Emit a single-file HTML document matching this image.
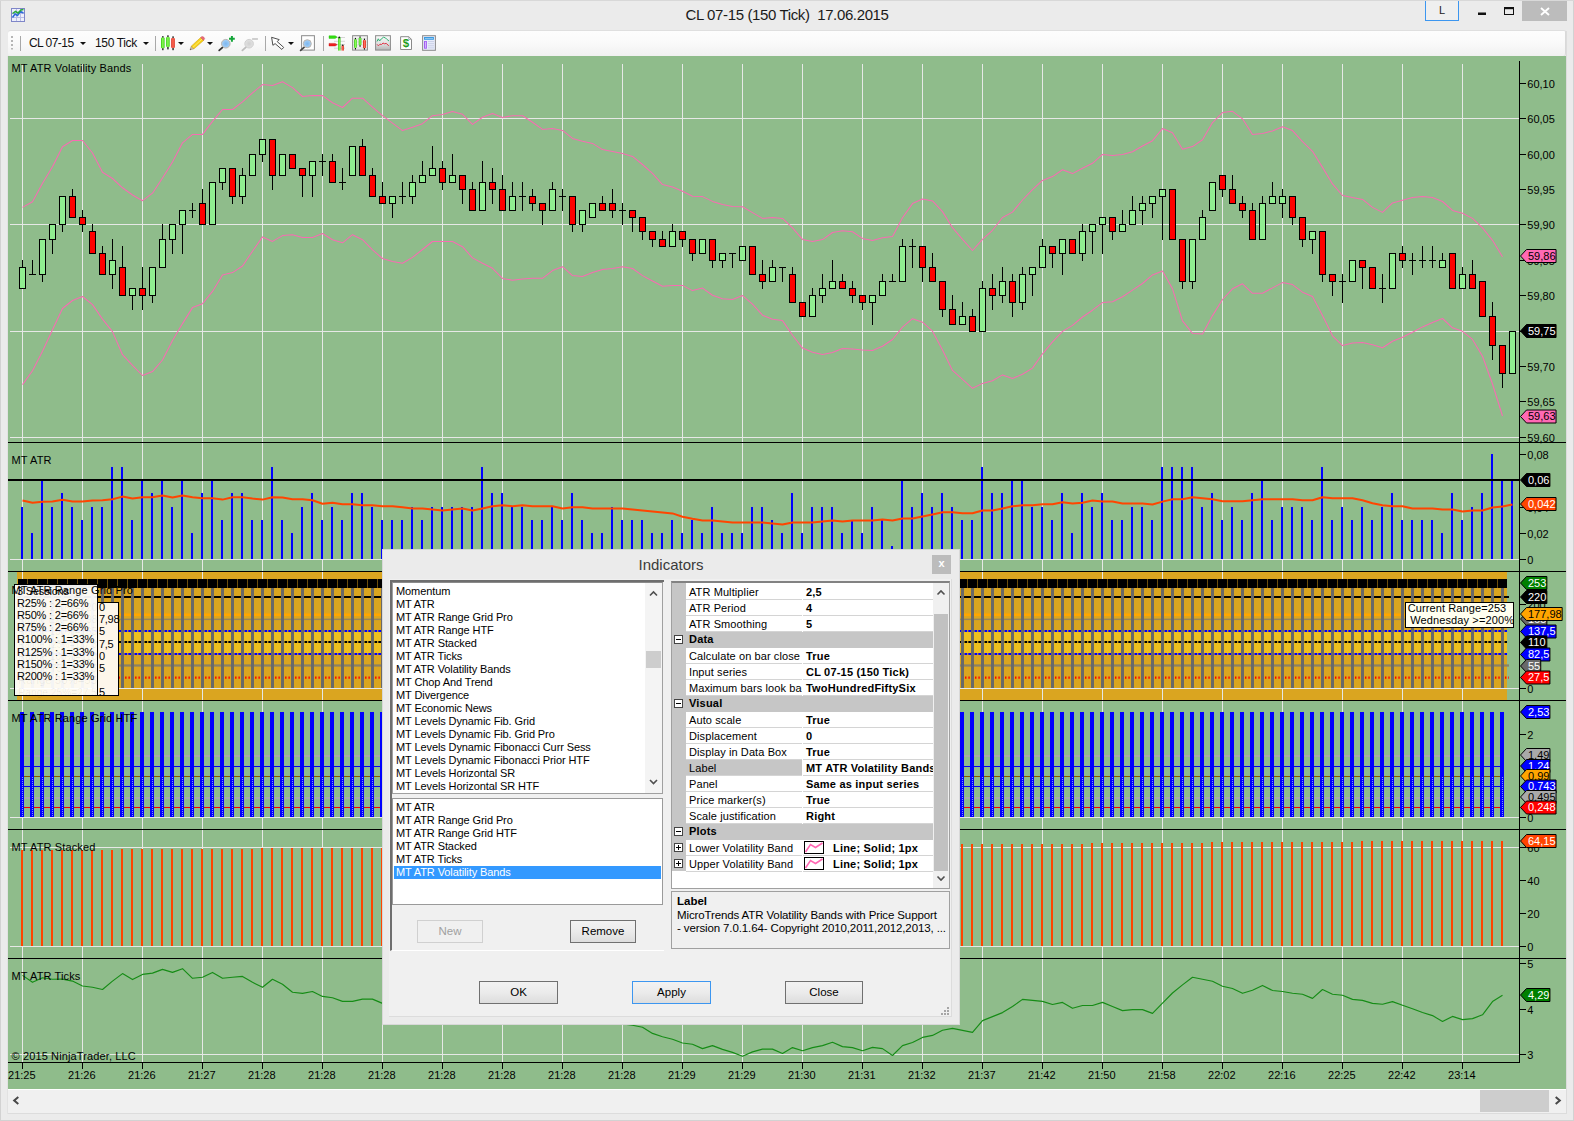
<!DOCTYPE html>
<html><head><meta charset="utf-8"><title>CL 07-15 (150 Tick) 17.06.2015</title>
<style>
html,body{margin:0;padding:0}
body{width:1574px;height:1121px;overflow:hidden;position:relative;background:#ebebeb;font-family:"Liberation Sans",Arial,sans-serif;font-size:11px;color:#000}
.abs{position:absolute}
#frameL{left:0;top:0;width:1px;height:1121px;background:#d2d2d2}
#frameT{left:0;top:0;width:1574px;height:1px;background:#d8d8d8}
#title{left:0;top:5px;width:1574px;text-align:center;font-size:15px;letter-spacing:-0.37px;color:#1a1a1a;white-space:pre;line-height:20px}
#btnL{left:1425px;top:0px;width:32px;height:19px;border:1px solid #3c96f0;background:#efefef;text-align:center;font-size:11px;line-height:18px;color:#222}
#btnX{left:1522px;top:1px;width:45px;height:20px;background:#bcbcbc}
#toolbar{left:8px;top:30px;width:1557px;height:25px;border-top:1px solid #dfdfdf;border-right:1px solid #d9d9d9;border-radius:3px 2px 3px 3px;background:linear-gradient(#fdfdfd,#fafafa 45%,#f1f1f1 100%)}
.tbt{position:absolute;top:5px;font-size:12px;line-height:14px;color:#111;white-space:pre;letter-spacing:-0.35px}
.sep{position:absolute;top:5px;width:1px;height:15px;background:#a8a8a8}
.dd{position:absolute;top:11px;width:0;height:0;border-left:3px solid transparent;border-right:3px solid transparent;border-top:3.5px solid #111}
#hscroll{left:8px;top:1089px;width:1558px;height:23px;background:#f0f0f0;border-top:1px solid #fff;border-bottom:1px solid #dcdcdc}
#thumb{left:1480px;top:1090px;width:69px;height:22px;background:#cdcdcd}
/* dialog */
#dlg{left:382px;top:549px;width:578px;height:476px;background:#ebebeb;box-shadow:inset 0 0 0 1px rgba(200,200,200,.55)}
#dlgc{left:7px;top:30px;width:562px;height:437px;background:#f0f0f0;border-right:1px solid #dcdcdc;border-bottom:1px solid #dcdcdc}
#dtitle{left:0px;top:6px;width:578px;text-align:center;font-size:15px;line-height:20px;color:#3a3a3a}
#dclose{left:550px;top:6px;width:19px;height:19px;background:#bcbcbc;color:#fff;text-align:center;font-size:11px;line-height:17px;font-weight:bold}
.lb{position:absolute;background:#fff;font-size:11px;line-height:13px;overflow:hidden}
.lb div{padding-left:3px;height:13px;letter-spacing:-0.1px;white-space:pre;position:relative;top:1px}
.btn{position:absolute;box-sizing:border-box;border:1px solid #707070;background:linear-gradient(#f2f2f2,#ebebeb 50%,#dddddd);text-align:center;font-size:11.5px;line-height:21px;height:23px;color:#000}
.pg{position:absolute;font-size:11px;line-height:17px;white-space:pre}
.row{position:absolute;left:0;width:261px;height:16px}
.row .n{position:absolute;left:14px;top:0;width:116px;height:15px;background:#fff;border-bottom:1px solid #d4d4d4;overflow:hidden;text-indent:3px;letter-spacing:0.1px}
.row .v{position:absolute;left:131px;top:0;width:130px;height:15px;background:#fff;border-bottom:1px solid #d4d4d4;font-weight:bold;overflow:hidden;text-indent:3px;letter-spacing:0.2px}
.cat{position:absolute;left:0;width:261px;height:16px;background:#c6c6c6;font-weight:bold;text-indent:17px;line-height:15px;letter-spacing:0.2px}
.pm{position:absolute;left:2px;top:3px;width:7px;height:7px;border:1px solid #444;background:#fff}
.pm:before{content:"";position:absolute;left:1px;top:3px;width:5px;height:1px;background:#000}
.pm.plus:after{content:"";position:absolute;left:3px;top:1px;width:1px;height:5px;background:#000}
</style></head><body>
<div class="abs" id="title">CL 07-15 (150 Tick)  17.06.2015</div>
<div class="abs" id="btnL">L</div>
<div class="abs" id="btnX"></div>
<div class="abs" id="toolbar">
 <div class="tbt" style="left:21px;letter-spacing:-0.55px">CL 07-15</div><div class="dd" style="left:72px"></div>
 <div class="tbt" style="left:87px">150 Tick</div><div class="dd" style="left:135px"></div>
 <div class="sep" style="left:12px"></div><div class="sep" style="left:147px"></div><div class="sep" style="left:257px"></div><div class="sep" style="left:315px"></div>
 <div class="dd" style="left:170px"></div><div class="dd" style="left:199px"></div><div class="dd" style="left:280px"></div>
</div>
<div class="abs" id="hscroll"></div><div class="abs" style="left:1566px;top:31px;width:1px;height:1083px;background:#dcdcdc"></div><div class="abs" style="left:7px;top:56px;width:1px;height:1058px;background:#e2e2e2"></div><div class="abs" style="left:0;top:0;width:1px;height:1121px;background:#d2d2d2"></div><div class="abs" style="left:1573px;top:0;width:1px;height:1121px;background:#d2d2d2"></div><div class="abs" style="left:0;top:1120px;width:1574px;height:1px;background:#d2d2d2"></div><div class="abs" style="left:0;top:0;width:1574px;height:1px;background:#d8d8d8"></div><div class="abs" id="thumb"></div>
<svg id="chart" width="1574" height="1121" viewBox="0 0 1574 1121" style="position:absolute;left:0;top:0" font-family="Liberation Sans, Arial, sans-serif" font-size="11">
<rect x="8" y="56" width="1558" height="1033" fill="#8fbc8b" />
<g shape-rendering="crispEdges">
<rect x="17" y="572" width="1490" height="128" fill="#daa520" />
<rect x="17" y="632" width="1490" height="21" fill="#eebf1f" />
<rect x="22" y="64" width="1" height="998" fill="#e6e8e6" />
<rect x="82" y="64" width="1" height="998" fill="#e6e8e6" />
<rect x="142" y="64" width="1" height="998" fill="#e6e8e6" />
<rect x="202" y="64" width="1" height="998" fill="#e6e8e6" />
<rect x="262" y="64" width="1" height="998" fill="#e6e8e6" />
<rect x="322" y="64" width="1" height="998" fill="#e6e8e6" />
<rect x="382" y="64" width="1" height="998" fill="#e6e8e6" />
<rect x="442" y="64" width="1" height="998" fill="#e6e8e6" />
<rect x="502" y="64" width="1" height="998" fill="#e6e8e6" />
<rect x="562" y="64" width="1" height="998" fill="#e6e8e6" />
<rect x="622" y="64" width="1" height="998" fill="#e6e8e6" />
<rect x="682" y="64" width="1" height="998" fill="#e6e8e6" />
<rect x="742" y="64" width="1" height="998" fill="#e6e8e6" />
<rect x="802" y="64" width="1" height="998" fill="#e6e8e6" />
<rect x="862" y="64" width="1" height="998" fill="#e6e8e6" />
<rect x="922" y="64" width="1" height="998" fill="#e6e8e6" />
<rect x="982" y="64" width="1" height="998" fill="#e6e8e6" />
<rect x="1042" y="64" width="1" height="998" fill="#e6e8e6" />
<rect x="1102" y="64" width="1" height="998" fill="#e6e8e6" />
<rect x="1162" y="64" width="1" height="998" fill="#e6e8e6" />
<rect x="1222" y="64" width="1" height="998" fill="#e6e8e6" />
<rect x="1282" y="64" width="1" height="998" fill="#e6e8e6" />
<rect x="1342" y="64" width="1" height="998" fill="#e6e8e6" />
<rect x="1402" y="64" width="1" height="998" fill="#e6e8e6" />
<rect x="1462" y="64" width="1" height="998" fill="#e6e8e6" />
<rect x="10" y="118" width="1510" height="1" fill="#e6e8e6" />
<rect x="10" y="224" width="1510" height="1" fill="#e6e8e6" />
<rect x="10" y="331" width="1510" height="1" fill="#e6e8e6" />
<rect x="10" y="437" width="1510" height="1" fill="#e6e8e6" />
<rect x="10" y="559" width="1510" height="1" fill="#e6e8e6" />
<rect x="10" y="688" width="1510" height="1" fill="#e6e8e6" />
<rect x="10" y="817" width="1510" height="1" fill="#e6e8e6" />
<rect x="10" y="847" width="1510" height="1" fill="#e6e8e6" />
<rect x="10" y="946" width="1510" height="1" fill="#e6e8e6" />
<rect x="10" y="1054" width="1510" height="1" fill="#e6e8e6" />
</g>
<polyline fill="none" stroke="#f86cb2" stroke-width="1.05" stroke-linejoin="round"  points="22.5,207.4 32.5,201.7 42.5,183.3 52.5,166.8 62.5,146.8 72.5,140.5 82.5,140.5 92.5,153 102.5,172.3 112.5,178.5 122.5,187.8 132.5,195 142.5,200.7 152.5,193.2 162.5,178 172.5,162 182.5,142.8 192.5,134.4 202.5,134.4 212.5,121.4 222.5,109.5 232.5,109.5 242.5,101.8 252.5,92.9 262.5,84.6 272.5,85.4 282.5,81.7 292.5,87.6 302.5,96.5 312.5,95.6 322.5,95.6 332.5,102.7 342.5,107.5 352.5,98.2 362.5,98.2 372.5,107.1 382.5,115.7 392.5,123.2 402.5,130.6 412.5,127.2 422.5,123.7 432.5,115.7 442.5,114.6 452.5,111.6 462.5,114.3 472.5,124.4 482.5,117.3 492.5,113.4 502.5,117.5 512.5,115.7 522.5,115.7 532.5,122.3 542.5,129.4 552.5,128.6 562.5,130.4 572.5,138.4 582.5,141.2 592.5,143.4 602.5,149.6 612.5,151.4 622.5,153.5 632.5,156.4 642.5,164.5 652.5,173.4 662.5,184.6 672.5,187.1 682.5,191.2 692.5,196.2 702.5,196.6 712.5,201.4 722.5,204.6 732.5,206.4 742.5,206.8 752.5,212.6 762.5,218.4 772.5,217.5 782.5,218.4 792.5,227.8 802.5,239.4 812.5,241.4 822.5,239.6 832.5,232.5 842.5,230.7 852.5,231.8 862.5,238.4 872.5,240.5 882.5,237.8 892.5,236.6 902.5,217.8 912.5,203.6 922.5,199.1 932.5,200.9 942.5,211.6 952.5,227.7 962.5,239.3 972.5,250.5 982.5,239.3 992.5,230.3 1002.5,217.5 1012.5,212.1 1022.5,200 1032.5,189.6 1042.5,180.4 1052.5,176.6 1062.5,169.7 1072.5,173.6 1082.5,168.3 1092.5,163.3 1102.5,154.4 1112.5,155.5 1122.5,154.4 1132.5,151.7 1142.5,146 1152.5,140.7 1162.5,128.6 1172.5,132.7 1182.5,149.2 1192.5,146.6 1202.5,139.8 1212.5,122.6 1222.5,112.6 1232.5,111.3 1242.5,118.8 1252.5,134.5 1262.5,133.6 1272.5,130.9 1282.5,126.8 1292.5,130.6 1302.5,141.6 1312.5,151.3 1322.5,167.4 1332.5,183.9 1342.5,195.5 1352.5,197.6 1362.5,199.4 1372.5,207.4 1382.5,212.4 1392.5,202.9 1402.5,200.3 1412.5,197.6 1422.5,196.4 1432.5,197.6 1442.5,201.5 1452.5,210.4 1462.5,213.3 1472.5,218.4 1482.5,227.8 1492.5,240.3 1502.5,256.8"/>
<polyline fill="none" stroke="#f86cb2" stroke-width="1.05" stroke-linejoin="round"  points="22.5,384.6 32.5,370.7 42.5,351.2 52.5,329.8 62.5,308.5 72.5,300.5 82.5,296.5 92.5,304.6 102.5,319.1 112.5,331.6 122.5,354.7 132.5,365.4 142.5,375.5 152.5,371.6 162.5,360 172.5,340.5 182.5,323.6 192.5,307.6 202.5,303.7 212.5,291.4 222.5,274.9 232.5,272.6 242.5,266 252.5,251.2 262.5,236.9 272.5,241.4 282.5,235.6 292.5,234.7 302.5,237.4 312.5,237.4 322.5,233.5 332.5,239.7 342.5,242.8 352.5,234.7 362.5,239.7 372.5,249.9 382.5,258.5 392.5,261.5 402.5,263.3 412.5,257.4 422.5,249.5 432.5,241.5 442.5,241.5 452.5,241.5 462.5,246.7 472.5,257.9 482.5,263.3 492.5,268.3 502.5,278.4 512.5,280.2 522.5,279 532.5,278.3 542.5,278.3 552.5,270.6 562.5,266.7 572.5,275.6 582.5,276.5 592.5,272.4 602.5,269.4 612.5,268.5 622.5,266.7 632.5,268.5 642.5,275.6 652.5,281 662.5,286.3 672.5,285.4 682.5,285.4 692.5,290.6 702.5,288.1 712.5,295.3 722.5,298.7 732.5,299.5 742.5,295.6 752.5,304.2 762.5,315.2 772.5,319.3 782.5,320.6 792.5,335.2 802.5,348.1 812.5,352.2 822.5,354.4 832.5,352.6 842.5,348.5 852.5,349 862.5,349.9 872.5,350.4 882.5,346.3 892.5,339.5 902.5,327.1 912.5,318.7 922.5,322.2 932.5,331.2 942.5,349.9 952.5,370.4 962.5,379.3 972.5,388.3 982.5,383.4 992.5,380.8 1002.5,374.9 1012.5,378.4 1022.5,374.3 1032.5,368.1 1042.5,353.8 1052.5,341.9 1062.5,331.4 1072.5,325.4 1082.5,317 1092.5,310.2 1102.5,302.6 1112.5,301.7 1122.5,296.8 1132.5,290.1 1142.5,283.5 1152.5,274.9 1162.5,271 1172.5,288.8 1182.5,320.9 1192.5,333.4 1202.5,334 1212.5,315.6 1222.5,299.5 1232.5,288.8 1242.5,283.8 1252.5,293.3 1262.5,293.3 1272.5,287.9 1282.5,282.6 1292.5,284.6 1302.5,292.2 1312.5,296.5 1322.5,315.5 1332.5,335.8 1342.5,345.6 1352.5,342.9 1362.5,342.6 1372.5,344.7 1382.5,347.8 1392.5,341.2 1402.5,337.2 1412.5,332.2 1422.5,326.9 1432.5,322.4 1442.5,318.5 1452.5,327.8 1462.5,331.3 1472.5,339.4 1482.5,356.3 1492.5,384 1502.5,416"/>
<g shape-rendering="crispEdges">
<rect x="22" y="260" width="1" height="29" fill="#000" />
<rect x="19" y="267" width="7" height="22" fill="#000" />
<rect x="20" y="268" width="5" height="20" fill="#90ee90" />
<rect x="32" y="260" width="1" height="15" fill="#000" />
<rect x="29" y="274" width="7" height="1" fill="#000" />
<rect x="42" y="239" width="1" height="43" fill="#000" />
<rect x="39" y="239" width="7" height="36" fill="#000" />
<rect x="40" y="240" width="5" height="34" fill="#90ee90" />
<rect x="52" y="224" width="1" height="30" fill="#000" />
<rect x="49" y="224" width="7" height="16" fill="#000" />
<rect x="50" y="225" width="5" height="14" fill="#90ee90" />
<rect x="62" y="196" width="1" height="36" fill="#000" />
<rect x="59" y="196" width="7" height="29" fill="#000" />
<rect x="60" y="197" width="5" height="27" fill="#90ee90" />
<rect x="72" y="189" width="1" height="29" fill="#000" />
<rect x="69" y="196" width="7" height="22" fill="#000" />
<rect x="70" y="197" width="5" height="20" fill="#ff0000" />
<rect x="82" y="210" width="1" height="22" fill="#000" />
<rect x="79" y="217" width="7" height="8" fill="#000" />
<rect x="80" y="218" width="5" height="6" fill="#ff0000" />
<rect x="92" y="224" width="1" height="30" fill="#000" />
<rect x="89" y="231" width="7" height="23" fill="#000" />
<rect x="90" y="232" width="5" height="21" fill="#ff0000" />
<rect x="102" y="246" width="1" height="29" fill="#000" />
<rect x="99" y="253" width="7" height="22" fill="#000" />
<rect x="100" y="254" width="5" height="20" fill="#ff0000" />
<rect x="112" y="239" width="1" height="50" fill="#000" />
<rect x="109" y="260" width="7" height="15" fill="#000" />
<rect x="110" y="261" width="5" height="13" fill="#90ee90" />
<rect x="122" y="246" width="1" height="50" fill="#000" />
<rect x="119" y="267" width="7" height="29" fill="#000" />
<rect x="120" y="268" width="5" height="27" fill="#ff0000" />
<rect x="132" y="288" width="1" height="22" fill="#000" />
<rect x="129" y="288" width="7" height="8" fill="#000" />
<rect x="130" y="289" width="5" height="6" fill="#90ee90" />
<rect x="142" y="267" width="1" height="43" fill="#000" />
<rect x="139" y="288" width="7" height="8" fill="#000" />
<rect x="140" y="289" width="5" height="6" fill="#ff0000" />
<rect x="152" y="267" width="1" height="36" fill="#000" />
<rect x="149" y="267" width="7" height="29" fill="#000" />
<rect x="150" y="268" width="5" height="27" fill="#90ee90" />
<rect x="162" y="224" width="1" height="44" fill="#000" />
<rect x="159" y="239" width="7" height="29" fill="#000" />
<rect x="160" y="240" width="5" height="27" fill="#90ee90" />
<rect x="172" y="224" width="1" height="30" fill="#000" />
<rect x="169" y="224" width="7" height="16" fill="#000" />
<rect x="170" y="225" width="5" height="14" fill="#90ee90" />
<rect x="182" y="210" width="1" height="44" fill="#000" />
<rect x="179" y="210" width="7" height="15" fill="#000" />
<rect x="180" y="211" width="5" height="13" fill="#90ee90" />
<rect x="192" y="203" width="1" height="15" fill="#000" />
<rect x="189" y="210" width="7" height="1" fill="#000" />
<rect x="202" y="189" width="1" height="36" fill="#000" />
<rect x="199" y="203" width="7" height="22" fill="#000" />
<rect x="200" y="204" width="5" height="20" fill="#ff0000" />
<rect x="212" y="182" width="1" height="43" fill="#000" />
<rect x="209" y="182" width="7" height="43" fill="#000" />
<rect x="210" y="183" width="5" height="41" fill="#90ee90" />
<rect x="222" y="168" width="1" height="22" fill="#000" />
<rect x="219" y="168" width="7" height="15" fill="#000" />
<rect x="220" y="169" width="5" height="13" fill="#90ee90" />
<rect x="232" y="168" width="1" height="36" fill="#000" />
<rect x="229" y="168" width="7" height="29" fill="#000" />
<rect x="230" y="169" width="5" height="27" fill="#ff0000" />
<rect x="242" y="168" width="1" height="36" fill="#000" />
<rect x="239" y="175" width="7" height="22" fill="#000" />
<rect x="240" y="176" width="5" height="20" fill="#90ee90" />
<rect x="252" y="154" width="1" height="22" fill="#000" />
<rect x="249" y="154" width="7" height="22" fill="#000" />
<rect x="250" y="155" width="5" height="20" fill="#90ee90" />
<rect x="262" y="139" width="1" height="23" fill="#000" />
<rect x="259" y="139" width="7" height="16" fill="#000" />
<rect x="260" y="140" width="5" height="14" fill="#90ee90" />
<rect x="272" y="139" width="1" height="51" fill="#000" />
<rect x="269" y="139" width="7" height="37" fill="#000" />
<rect x="270" y="140" width="5" height="35" fill="#ff0000" />
<rect x="282" y="154" width="1" height="22" fill="#000" />
<rect x="279" y="154" width="7" height="22" fill="#000" />
<rect x="280" y="155" width="5" height="20" fill="#90ee90" />
<rect x="292" y="154" width="1" height="15" fill="#000" />
<rect x="289" y="154" width="7" height="15" fill="#000" />
<rect x="290" y="155" width="5" height="13" fill="#ff0000" />
<rect x="302" y="168" width="1" height="29" fill="#000" />
<rect x="299" y="168" width="7" height="8" fill="#000" />
<rect x="300" y="169" width="5" height="6" fill="#ff0000" />
<rect x="312" y="161" width="1" height="36" fill="#000" />
<rect x="309" y="161" width="7" height="15" fill="#000" />
<rect x="310" y="162" width="5" height="13" fill="#90ee90" />
<rect x="322" y="154" width="1" height="22" fill="#000" />
<rect x="319" y="161" width="7" height="1" fill="#000" />
<rect x="332" y="154" width="1" height="29" fill="#000" />
<rect x="329" y="161" width="7" height="22" fill="#000" />
<rect x="330" y="162" width="5" height="20" fill="#ff0000" />
<rect x="342" y="168" width="1" height="22" fill="#000" />
<rect x="339" y="182" width="7" height="1" fill="#000" />
<rect x="352" y="146" width="1" height="30" fill="#000" />
<rect x="349" y="146" width="7" height="30" fill="#000" />
<rect x="350" y="147" width="5" height="28" fill="#90ee90" />
<rect x="362" y="139" width="1" height="37" fill="#000" />
<rect x="359" y="146" width="7" height="30" fill="#000" />
<rect x="360" y="147" width="5" height="28" fill="#ff0000" />
<rect x="372" y="168" width="1" height="29" fill="#000" />
<rect x="369" y="175" width="7" height="22" fill="#000" />
<rect x="370" y="176" width="5" height="20" fill="#ff0000" />
<rect x="382" y="182" width="1" height="22" fill="#000" />
<rect x="379" y="196" width="7" height="8" fill="#000" />
<rect x="380" y="197" width="5" height="6" fill="#ff0000" />
<rect x="392" y="196" width="1" height="22" fill="#000" />
<rect x="389" y="196" width="7" height="8" fill="#000" />
<rect x="390" y="197" width="5" height="6" fill="#90ee90" />
<rect x="402" y="182" width="1" height="22" fill="#000" />
<rect x="399" y="196" width="7" height="1" fill="#000" />
<rect x="412" y="175" width="1" height="29" fill="#000" />
<rect x="409" y="182" width="7" height="15" fill="#000" />
<rect x="410" y="183" width="5" height="13" fill="#90ee90" />
<rect x="422" y="161" width="1" height="22" fill="#000" />
<rect x="419" y="175" width="7" height="8" fill="#000" />
<rect x="420" y="176" width="5" height="6" fill="#90ee90" />
<rect x="432" y="146" width="1" height="30" fill="#000" />
<rect x="429" y="168" width="7" height="8" fill="#000" />
<rect x="430" y="169" width="5" height="6" fill="#90ee90" />
<rect x="442" y="161" width="1" height="29" fill="#000" />
<rect x="439" y="168" width="7" height="15" fill="#000" />
<rect x="440" y="169" width="5" height="13" fill="#ff0000" />
<rect x="452" y="154" width="1" height="29" fill="#000" />
<rect x="449" y="175" width="7" height="8" fill="#000" />
<rect x="450" y="176" width="5" height="6" fill="#90ee90" />
<rect x="462" y="175" width="1" height="29" fill="#000" />
<rect x="459" y="175" width="7" height="15" fill="#000" />
<rect x="460" y="176" width="5" height="13" fill="#ff0000" />
<rect x="472" y="182" width="1" height="29" fill="#000" />
<rect x="469" y="189" width="7" height="22" fill="#000" />
<rect x="470" y="190" width="5" height="20" fill="#ff0000" />
<rect x="482" y="161" width="1" height="50" fill="#000" />
<rect x="479" y="182" width="7" height="29" fill="#000" />
<rect x="480" y="183" width="5" height="27" fill="#90ee90" />
<rect x="492" y="168" width="1" height="36" fill="#000" />
<rect x="489" y="182" width="7" height="8" fill="#000" />
<rect x="490" y="183" width="5" height="6" fill="#ff0000" />
<rect x="502" y="175" width="1" height="36" fill="#000" />
<rect x="499" y="189" width="7" height="22" fill="#000" />
<rect x="500" y="190" width="5" height="20" fill="#ff0000" />
<rect x="512" y="182" width="1" height="29" fill="#000" />
<rect x="509" y="196" width="7" height="15" fill="#000" />
<rect x="510" y="197" width="5" height="13" fill="#90ee90" />
<rect x="522" y="182" width="1" height="29" fill="#000" />
<rect x="519" y="196" width="7" height="1" fill="#000" />
<rect x="532" y="189" width="1" height="22" fill="#000" />
<rect x="529" y="196" width="7" height="8" fill="#000" />
<rect x="530" y="197" width="5" height="6" fill="#ff0000" />
<rect x="542" y="203" width="1" height="22" fill="#000" />
<rect x="539" y="203" width="7" height="8" fill="#000" />
<rect x="540" y="204" width="5" height="6" fill="#ff0000" />
<rect x="552" y="182" width="1" height="29" fill="#000" />
<rect x="549" y="189" width="7" height="22" fill="#000" />
<rect x="550" y="190" width="5" height="20" fill="#90ee90" />
<rect x="562" y="189" width="1" height="22" fill="#000" />
<rect x="559" y="196" width="7" height="1" fill="#000" />
<rect x="572" y="196" width="1" height="36" fill="#000" />
<rect x="569" y="196" width="7" height="29" fill="#000" />
<rect x="570" y="197" width="5" height="27" fill="#ff0000" />
<rect x="582" y="210" width="1" height="22" fill="#000" />
<rect x="579" y="210" width="7" height="15" fill="#000" />
<rect x="580" y="211" width="5" height="13" fill="#90ee90" />
<rect x="592" y="203" width="1" height="15" fill="#000" />
<rect x="589" y="203" width="7" height="15" fill="#000" />
<rect x="590" y="204" width="5" height="13" fill="#90ee90" />
<rect x="602" y="196" width="1" height="15" fill="#000" />
<rect x="599" y="203" width="7" height="8" fill="#000" />
<rect x="600" y="204" width="5" height="6" fill="#ff0000" />
<rect x="612" y="189" width="1" height="29" fill="#000" />
<rect x="609" y="203" width="7" height="8" fill="#000" />
<rect x="610" y="204" width="5" height="6" fill="#ff0000" />
<rect x="622" y="203" width="1" height="22" fill="#000" />
<rect x="619" y="210" width="7" height="1" fill="#000" />
<rect x="632" y="210" width="1" height="22" fill="#000" />
<rect x="629" y="210" width="7" height="8" fill="#000" />
<rect x="630" y="211" width="5" height="6" fill="#ff0000" />
<rect x="642" y="217" width="1" height="23" fill="#000" />
<rect x="639" y="217" width="7" height="15" fill="#000" />
<rect x="640" y="218" width="5" height="13" fill="#ff0000" />
<rect x="652" y="231" width="1" height="16" fill="#000" />
<rect x="649" y="231" width="7" height="9" fill="#000" />
<rect x="650" y="232" width="5" height="7" fill="#ff0000" />
<rect x="662" y="231" width="1" height="16" fill="#000" />
<rect x="659" y="239" width="7" height="8" fill="#000" />
<rect x="660" y="240" width="5" height="6" fill="#ff0000" />
<rect x="672" y="224" width="1" height="23" fill="#000" />
<rect x="669" y="231" width="7" height="16" fill="#000" />
<rect x="670" y="232" width="5" height="14" fill="#90ee90" />
<rect x="682" y="231" width="1" height="16" fill="#000" />
<rect x="679" y="231" width="7" height="9" fill="#000" />
<rect x="680" y="232" width="5" height="7" fill="#ff0000" />
<rect x="692" y="239" width="1" height="22" fill="#000" />
<rect x="689" y="239" width="7" height="15" fill="#000" />
<rect x="690" y="240" width="5" height="13" fill="#ff0000" />
<rect x="702" y="239" width="1" height="15" fill="#000" />
<rect x="699" y="239" width="7" height="15" fill="#000" />
<rect x="700" y="240" width="5" height="13" fill="#90ee90" />
<rect x="712" y="239" width="1" height="29" fill="#000" />
<rect x="709" y="239" width="7" height="22" fill="#000" />
<rect x="710" y="240" width="5" height="20" fill="#ff0000" />
<rect x="722" y="253" width="1" height="15" fill="#000" />
<rect x="719" y="253" width="7" height="8" fill="#000" />
<rect x="720" y="254" width="5" height="6" fill="#90ee90" />
<rect x="732" y="253" width="1" height="15" fill="#000" />
<rect x="729" y="253" width="7" height="1" fill="#000" />
<rect x="742" y="246" width="1" height="15" fill="#000" />
<rect x="739" y="246" width="7" height="15" fill="#000" />
<rect x="740" y="247" width="5" height="13" fill="#90ee90" />
<rect x="752" y="246" width="1" height="29" fill="#000" />
<rect x="749" y="246" width="7" height="29" fill="#000" />
<rect x="750" y="247" width="5" height="27" fill="#ff0000" />
<rect x="762" y="260" width="1" height="29" fill="#000" />
<rect x="759" y="274" width="7" height="8" fill="#000" />
<rect x="760" y="275" width="5" height="6" fill="#ff0000" />
<rect x="772" y="260" width="1" height="22" fill="#000" />
<rect x="769" y="267" width="7" height="15" fill="#000" />
<rect x="770" y="268" width="5" height="13" fill="#90ee90" />
<rect x="782" y="267" width="1" height="15" fill="#000" />
<rect x="779" y="267" width="7" height="1" fill="#000" />
<rect x="792" y="267" width="1" height="36" fill="#000" />
<rect x="789" y="274" width="7" height="29" fill="#000" />
<rect x="790" y="275" width="5" height="27" fill="#ff0000" />
<rect x="802" y="302" width="1" height="15" fill="#000" />
<rect x="799" y="302" width="7" height="15" fill="#000" />
<rect x="800" y="303" width="5" height="13" fill="#ff0000" />
<rect x="812" y="288" width="1" height="29" fill="#000" />
<rect x="809" y="295" width="7" height="22" fill="#000" />
<rect x="810" y="296" width="5" height="20" fill="#90ee90" />
<rect x="822" y="274" width="1" height="29" fill="#000" />
<rect x="819" y="288" width="7" height="8" fill="#000" />
<rect x="820" y="289" width="5" height="6" fill="#90ee90" />
<rect x="832" y="260" width="1" height="29" fill="#000" />
<rect x="829" y="281" width="7" height="8" fill="#000" />
<rect x="830" y="282" width="5" height="6" fill="#90ee90" />
<rect x="842" y="274" width="1" height="15" fill="#000" />
<rect x="839" y="281" width="7" height="8" fill="#000" />
<rect x="840" y="282" width="5" height="6" fill="#ff0000" />
<rect x="852" y="281" width="1" height="22" fill="#000" />
<rect x="849" y="288" width="7" height="8" fill="#000" />
<rect x="850" y="289" width="5" height="6" fill="#ff0000" />
<rect x="862" y="295" width="1" height="15" fill="#000" />
<rect x="859" y="295" width="7" height="8" fill="#000" />
<rect x="860" y="296" width="5" height="6" fill="#ff0000" />
<rect x="872" y="295" width="1" height="30" fill="#000" />
<rect x="869" y="295" width="7" height="8" fill="#000" />
<rect x="870" y="296" width="5" height="6" fill="#90ee90" />
<rect x="882" y="274" width="1" height="22" fill="#000" />
<rect x="879" y="281" width="7" height="15" fill="#000" />
<rect x="880" y="282" width="5" height="13" fill="#90ee90" />
<rect x="892" y="274" width="1" height="8" fill="#000" />
<rect x="889" y="281" width="7" height="1" fill="#000" />
<rect x="902" y="239" width="1" height="43" fill="#000" />
<rect x="899" y="246" width="7" height="36" fill="#000" />
<rect x="900" y="247" width="5" height="34" fill="#90ee90" />
<rect x="912" y="239" width="1" height="29" fill="#000" />
<rect x="909" y="246" width="7" height="1" fill="#000" />
<rect x="922" y="246" width="1" height="36" fill="#000" />
<rect x="919" y="246" width="7" height="22" fill="#000" />
<rect x="920" y="247" width="5" height="20" fill="#ff0000" />
<rect x="932" y="253" width="1" height="29" fill="#000" />
<rect x="929" y="267" width="7" height="15" fill="#000" />
<rect x="930" y="268" width="5" height="13" fill="#ff0000" />
<rect x="942" y="281" width="1" height="36" fill="#000" />
<rect x="939" y="281" width="7" height="29" fill="#000" />
<rect x="940" y="282" width="5" height="27" fill="#ff0000" />
<rect x="952" y="295" width="1" height="30" fill="#000" />
<rect x="949" y="309" width="7" height="16" fill="#000" />
<rect x="950" y="310" width="5" height="14" fill="#ff0000" />
<rect x="962" y="302" width="1" height="23" fill="#000" />
<rect x="959" y="316" width="7" height="9" fill="#000" />
<rect x="960" y="317" width="5" height="7" fill="#90ee90" />
<rect x="972" y="309" width="1" height="23" fill="#000" />
<rect x="969" y="316" width="7" height="16" fill="#000" />
<rect x="970" y="317" width="5" height="14" fill="#ff0000" />
<rect x="982" y="281" width="1" height="51" fill="#000" />
<rect x="979" y="288" width="7" height="44" fill="#000" />
<rect x="980" y="289" width="5" height="42" fill="#90ee90" />
<rect x="992" y="274" width="1" height="36" fill="#000" />
<rect x="989" y="288" width="7" height="8" fill="#000" />
<rect x="990" y="289" width="5" height="6" fill="#ff0000" />
<rect x="1002" y="267" width="1" height="36" fill="#000" />
<rect x="999" y="281" width="7" height="15" fill="#000" />
<rect x="1000" y="282" width="5" height="13" fill="#90ee90" />
<rect x="1012" y="274" width="1" height="43" fill="#000" />
<rect x="1009" y="281" width="7" height="22" fill="#000" />
<rect x="1010" y="282" width="5" height="20" fill="#ff0000" />
<rect x="1022" y="267" width="1" height="43" fill="#000" />
<rect x="1019" y="274" width="7" height="29" fill="#000" />
<rect x="1020" y="275" width="5" height="27" fill="#90ee90" />
<rect x="1032" y="267" width="1" height="29" fill="#000" />
<rect x="1029" y="267" width="7" height="8" fill="#000" />
<rect x="1030" y="268" width="5" height="6" fill="#90ee90" />
<rect x="1042" y="239" width="1" height="29" fill="#000" />
<rect x="1039" y="246" width="7" height="22" fill="#000" />
<rect x="1040" y="247" width="5" height="20" fill="#90ee90" />
<rect x="1052" y="246" width="1" height="22" fill="#000" />
<rect x="1049" y="246" width="7" height="8" fill="#000" />
<rect x="1050" y="247" width="5" height="6" fill="#ff0000" />
<rect x="1062" y="239" width="1" height="36" fill="#000" />
<rect x="1059" y="239" width="7" height="15" fill="#000" />
<rect x="1060" y="240" width="5" height="13" fill="#90ee90" />
<rect x="1072" y="239" width="1" height="15" fill="#000" />
<rect x="1069" y="239" width="7" height="15" fill="#000" />
<rect x="1070" y="240" width="5" height="13" fill="#ff0000" />
<rect x="1082" y="224" width="1" height="37" fill="#000" />
<rect x="1079" y="231" width="7" height="23" fill="#000" />
<rect x="1080" y="232" width="5" height="21" fill="#90ee90" />
<rect x="1092" y="224" width="1" height="30" fill="#000" />
<rect x="1089" y="224" width="7" height="8" fill="#000" />
<rect x="1090" y="225" width="5" height="6" fill="#90ee90" />
<rect x="1102" y="217" width="1" height="37" fill="#000" />
<rect x="1099" y="217" width="7" height="8" fill="#000" />
<rect x="1100" y="218" width="5" height="6" fill="#90ee90" />
<rect x="1112" y="217" width="1" height="23" fill="#000" />
<rect x="1109" y="217" width="7" height="15" fill="#000" />
<rect x="1110" y="218" width="5" height="13" fill="#ff0000" />
<rect x="1122" y="210" width="1" height="22" fill="#000" />
<rect x="1119" y="224" width="7" height="8" fill="#000" />
<rect x="1120" y="225" width="5" height="6" fill="#90ee90" />
<rect x="1132" y="196" width="1" height="29" fill="#000" />
<rect x="1129" y="210" width="7" height="15" fill="#000" />
<rect x="1130" y="211" width="5" height="13" fill="#90ee90" />
<rect x="1142" y="196" width="1" height="29" fill="#000" />
<rect x="1139" y="203" width="7" height="8" fill="#000" />
<rect x="1140" y="204" width="5" height="6" fill="#90ee90" />
<rect x="1152" y="196" width="1" height="22" fill="#000" />
<rect x="1149" y="196" width="7" height="8" fill="#000" />
<rect x="1150" y="197" width="5" height="6" fill="#90ee90" />
<rect x="1162" y="189" width="1" height="51" fill="#000" />
<rect x="1159" y="189" width="7" height="8" fill="#000" />
<rect x="1160" y="190" width="5" height="6" fill="#90ee90" />
<rect x="1172" y="189" width="1" height="51" fill="#000" />
<rect x="1169" y="189" width="7" height="51" fill="#000" />
<rect x="1170" y="190" width="5" height="49" fill="#ff0000" />
<rect x="1182" y="239" width="1" height="50" fill="#000" />
<rect x="1179" y="239" width="7" height="43" fill="#000" />
<rect x="1180" y="240" width="5" height="41" fill="#ff0000" />
<rect x="1192" y="239" width="1" height="50" fill="#000" />
<rect x="1189" y="239" width="7" height="43" fill="#000" />
<rect x="1190" y="240" width="5" height="41" fill="#90ee90" />
<rect x="1202" y="210" width="1" height="30" fill="#000" />
<rect x="1199" y="217" width="7" height="23" fill="#000" />
<rect x="1200" y="218" width="5" height="21" fill="#90ee90" />
<rect x="1212" y="182" width="1" height="29" fill="#000" />
<rect x="1209" y="182" width="7" height="29" fill="#000" />
<rect x="1210" y="183" width="5" height="27" fill="#90ee90" />
<rect x="1222" y="175" width="1" height="22" fill="#000" />
<rect x="1219" y="175" width="7" height="15" fill="#000" />
<rect x="1220" y="176" width="5" height="13" fill="#ff0000" />
<rect x="1232" y="175" width="1" height="29" fill="#000" />
<rect x="1229" y="189" width="7" height="15" fill="#000" />
<rect x="1230" y="190" width="5" height="13" fill="#ff0000" />
<rect x="1242" y="196" width="1" height="22" fill="#000" />
<rect x="1239" y="203" width="7" height="8" fill="#000" />
<rect x="1240" y="204" width="5" height="6" fill="#ff0000" />
<rect x="1252" y="203" width="1" height="37" fill="#000" />
<rect x="1249" y="210" width="7" height="30" fill="#000" />
<rect x="1250" y="211" width="5" height="28" fill="#ff0000" />
<rect x="1262" y="196" width="1" height="44" fill="#000" />
<rect x="1259" y="203" width="7" height="37" fill="#000" />
<rect x="1260" y="204" width="5" height="35" fill="#90ee90" />
<rect x="1272" y="182" width="1" height="22" fill="#000" />
<rect x="1269" y="196" width="7" height="8" fill="#000" />
<rect x="1270" y="197" width="5" height="6" fill="#90ee90" />
<rect x="1282" y="189" width="1" height="29" fill="#000" />
<rect x="1279" y="196" width="7" height="8" fill="#000" />
<rect x="1280" y="197" width="5" height="6" fill="#90ee90" />
<rect x="1292" y="196" width="1" height="29" fill="#000" />
<rect x="1289" y="196" width="7" height="22" fill="#000" />
<rect x="1290" y="197" width="5" height="20" fill="#ff0000" />
<rect x="1302" y="217" width="1" height="30" fill="#000" />
<rect x="1299" y="217" width="7" height="23" fill="#000" />
<rect x="1300" y="218" width="5" height="21" fill="#ff0000" />
<rect x="1312" y="231" width="1" height="23" fill="#000" />
<rect x="1309" y="231" width="7" height="9" fill="#000" />
<rect x="1310" y="232" width="5" height="7" fill="#90ee90" />
<rect x="1322" y="231" width="1" height="51" fill="#000" />
<rect x="1319" y="231" width="7" height="44" fill="#000" />
<rect x="1320" y="232" width="5" height="42" fill="#ff0000" />
<rect x="1332" y="274" width="1" height="22" fill="#000" />
<rect x="1329" y="274" width="7" height="8" fill="#000" />
<rect x="1330" y="275" width="5" height="6" fill="#ff0000" />
<rect x="1342" y="274" width="1" height="29" fill="#000" />
<rect x="1339" y="281" width="7" height="1" fill="#000" />
<rect x="1352" y="260" width="1" height="22" fill="#000" />
<rect x="1349" y="260" width="7" height="22" fill="#000" />
<rect x="1350" y="261" width="5" height="20" fill="#90ee90" />
<rect x="1362" y="260" width="1" height="29" fill="#000" />
<rect x="1359" y="260" width="7" height="8" fill="#000" />
<rect x="1360" y="261" width="5" height="6" fill="#ff0000" />
<rect x="1372" y="267" width="1" height="22" fill="#000" />
<rect x="1369" y="267" width="7" height="22" fill="#000" />
<rect x="1370" y="268" width="5" height="20" fill="#ff0000" />
<rect x="1382" y="274" width="1" height="29" fill="#000" />
<rect x="1379" y="288" width="7" height="1" fill="#000" />
<rect x="1392" y="253" width="1" height="36" fill="#000" />
<rect x="1389" y="253" width="7" height="36" fill="#000" />
<rect x="1390" y="254" width="5" height="34" fill="#90ee90" />
<rect x="1402" y="246" width="1" height="22" fill="#000" />
<rect x="1399" y="253" width="7" height="8" fill="#000" />
<rect x="1400" y="254" width="5" height="6" fill="#ff0000" />
<rect x="1412" y="253" width="1" height="22" fill="#000" />
<rect x="1409" y="260" width="7" height="1" fill="#000" />
<rect x="1422" y="246" width="1" height="22" fill="#000" />
<rect x="1419" y="260" width="7" height="1" fill="#000" />
<rect x="1432" y="246" width="1" height="22" fill="#000" />
<rect x="1429" y="260" width="7" height="1" fill="#000" />
<rect x="1442" y="253" width="1" height="15" fill="#000" />
<rect x="1439" y="260" width="7" height="8" fill="#000" />
<rect x="1440" y="261" width="5" height="6" fill="#90ee90" />
<rect x="1452" y="253" width="1" height="36" fill="#000" />
<rect x="1449" y="253" width="7" height="36" fill="#000" />
<rect x="1450" y="254" width="5" height="34" fill="#ff0000" />
<rect x="1462" y="267" width="1" height="22" fill="#000" />
<rect x="1459" y="274" width="7" height="15" fill="#000" />
<rect x="1460" y="275" width="5" height="13" fill="#90ee90" />
<rect x="1472" y="260" width="1" height="29" fill="#000" />
<rect x="1469" y="274" width="7" height="15" fill="#000" />
<rect x="1470" y="275" width="5" height="13" fill="#ff0000" />
<rect x="1482" y="281" width="1" height="36" fill="#000" />
<rect x="1479" y="281" width="7" height="36" fill="#000" />
<rect x="1480" y="282" width="5" height="34" fill="#ff0000" />
<rect x="1492" y="302" width="1" height="58" fill="#000" />
<rect x="1489" y="316" width="7" height="30" fill="#000" />
<rect x="1490" y="317" width="5" height="28" fill="#ff0000" />
<rect x="1502" y="345" width="1" height="43" fill="#000" />
<rect x="1499" y="345" width="7" height="29" fill="#000" />
<rect x="1500" y="346" width="5" height="27" fill="#ff0000" />
<rect x="1512" y="331" width="1" height="43" fill="#000" />
<rect x="1509" y="331" width="7" height="43" fill="#000" />
<rect x="1510" y="332" width="5" height="41" fill="#90ee90" />
</g>
<g shape-rendering="crispEdges">
<rect x="21" y="507" width="2" height="52" fill="#0000ff" />
<rect x="31" y="533" width="2" height="26" fill="#0000ff" />
<rect x="41" y="480" width="2" height="79" fill="#0000ff" />
<rect x="51" y="507" width="2" height="52" fill="#0000ff" />
<rect x="61" y="493" width="2" height="66" fill="#0000ff" />
<rect x="71" y="507" width="2" height="52" fill="#0000ff" />
<rect x="81" y="520" width="2" height="39" fill="#0000ff" />
<rect x="91" y="507" width="2" height="52" fill="#0000ff" />
<rect x="101" y="507" width="2" height="52" fill="#0000ff" />
<rect x="111" y="467" width="2" height="92" fill="#0000ff" />
<rect x="121" y="467" width="2" height="92" fill="#0000ff" />
<rect x="131" y="520" width="2" height="39" fill="#0000ff" />
<rect x="141" y="480" width="2" height="79" fill="#0000ff" />
<rect x="151" y="493" width="2" height="66" fill="#0000ff" />
<rect x="161" y="480" width="2" height="79" fill="#0000ff" />
<rect x="171" y="507" width="2" height="52" fill="#0000ff" />
<rect x="181" y="480" width="2" height="79" fill="#0000ff" />
<rect x="191" y="533" width="2" height="26" fill="#0000ff" />
<rect x="201" y="493" width="2" height="66" fill="#0000ff" />
<rect x="211" y="480" width="2" height="79" fill="#0000ff" />
<rect x="221" y="520" width="2" height="39" fill="#0000ff" />
<rect x="231" y="493" width="2" height="66" fill="#0000ff" />
<rect x="241" y="493" width="2" height="66" fill="#0000ff" />
<rect x="251" y="520" width="2" height="39" fill="#0000ff" />
<rect x="261" y="520" width="2" height="39" fill="#0000ff" />
<rect x="271" y="467" width="2" height="92" fill="#0000ff" />
<rect x="281" y="520" width="2" height="39" fill="#0000ff" />
<rect x="291" y="533" width="2" height="26" fill="#0000ff" />
<rect x="301" y="507" width="2" height="52" fill="#0000ff" />
<rect x="311" y="493" width="2" height="66" fill="#0000ff" />
<rect x="321" y="520" width="2" height="39" fill="#0000ff" />
<rect x="331" y="507" width="2" height="52" fill="#0000ff" />
<rect x="341" y="520" width="2" height="39" fill="#0000ff" />
<rect x="351" y="493" width="2" height="66" fill="#0000ff" />
<rect x="361" y="493" width="2" height="66" fill="#0000ff" />
<rect x="371" y="507" width="2" height="52" fill="#0000ff" />
<rect x="381" y="520" width="2" height="39" fill="#0000ff" />
<rect x="391" y="520" width="2" height="39" fill="#0000ff" />
<rect x="401" y="520" width="2" height="39" fill="#0000ff" />
<rect x="411" y="507" width="2" height="52" fill="#0000ff" />
<rect x="421" y="520" width="2" height="39" fill="#0000ff" />
<rect x="431" y="507" width="2" height="52" fill="#0000ff" />
<rect x="441" y="507" width="2" height="52" fill="#0000ff" />
<rect x="451" y="507" width="2" height="52" fill="#0000ff" />
<rect x="461" y="507" width="2" height="52" fill="#0000ff" />
<rect x="471" y="507" width="2" height="52" fill="#0000ff" />
<rect x="481" y="467" width="2" height="92" fill="#0000ff" />
<rect x="491" y="493" width="2" height="66" fill="#0000ff" />
<rect x="501" y="493" width="2" height="66" fill="#0000ff" />
<rect x="511" y="507" width="2" height="52" fill="#0000ff" />
<rect x="521" y="507" width="2" height="52" fill="#0000ff" />
<rect x="531" y="520" width="2" height="39" fill="#0000ff" />
<rect x="541" y="520" width="2" height="39" fill="#0000ff" />
<rect x="551" y="507" width="2" height="52" fill="#0000ff" />
<rect x="561" y="520" width="2" height="39" fill="#0000ff" />
<rect x="571" y="493" width="2" height="66" fill="#0000ff" />
<rect x="581" y="520" width="2" height="39" fill="#0000ff" />
<rect x="591" y="533" width="2" height="26" fill="#0000ff" />
<rect x="601" y="533" width="2" height="26" fill="#0000ff" />
<rect x="611" y="507" width="2" height="52" fill="#0000ff" />
<rect x="621" y="520" width="2" height="39" fill="#0000ff" />
<rect x="631" y="520" width="2" height="39" fill="#0000ff" />
<rect x="641" y="520" width="2" height="39" fill="#0000ff" />
<rect x="651" y="533" width="2" height="26" fill="#0000ff" />
<rect x="661" y="533" width="2" height="26" fill="#0000ff" />
<rect x="671" y="520" width="2" height="39" fill="#0000ff" />
<rect x="681" y="533" width="2" height="26" fill="#0000ff" />
<rect x="691" y="520" width="2" height="39" fill="#0000ff" />
<rect x="701" y="533" width="2" height="26" fill="#0000ff" />
<rect x="711" y="507" width="2" height="52" fill="#0000ff" />
<rect x="721" y="533" width="2" height="26" fill="#0000ff" />
<rect x="731" y="533" width="2" height="26" fill="#0000ff" />
<rect x="741" y="533" width="2" height="26" fill="#0000ff" />
<rect x="751" y="507" width="2" height="52" fill="#0000ff" />
<rect x="761" y="507" width="2" height="52" fill="#0000ff" />
<rect x="771" y="520" width="2" height="39" fill="#0000ff" />
<rect x="781" y="533" width="2" height="26" fill="#0000ff" />
<rect x="791" y="493" width="2" height="66" fill="#0000ff" />
<rect x="801" y="533" width="2" height="26" fill="#0000ff" />
<rect x="811" y="507" width="2" height="52" fill="#0000ff" />
<rect x="821" y="507" width="2" height="52" fill="#0000ff" />
<rect x="831" y="507" width="2" height="52" fill="#0000ff" />
<rect x="841" y="533" width="2" height="26" fill="#0000ff" />
<rect x="851" y="520" width="2" height="39" fill="#0000ff" />
<rect x="861" y="533" width="2" height="26" fill="#0000ff" />
<rect x="871" y="507" width="2" height="52" fill="#0000ff" />
<rect x="881" y="520" width="2" height="39" fill="#0000ff" />
<rect x="891" y="546" width="2" height="13" fill="#0000ff" />
<rect x="901" y="480" width="2" height="79" fill="#0000ff" />
<rect x="911" y="507" width="2" height="52" fill="#0000ff" />
<rect x="921" y="493" width="2" height="66" fill="#0000ff" />
<rect x="931" y="507" width="2" height="52" fill="#0000ff" />
<rect x="941" y="493" width="2" height="66" fill="#0000ff" />
<rect x="951" y="507" width="2" height="52" fill="#0000ff" />
<rect x="961" y="520" width="2" height="39" fill="#0000ff" />
<rect x="971" y="520" width="2" height="39" fill="#0000ff" />
<rect x="981" y="467" width="2" height="92" fill="#0000ff" />
<rect x="991" y="493" width="2" height="66" fill="#0000ff" />
<rect x="1001" y="493" width="2" height="66" fill="#0000ff" />
<rect x="1011" y="480" width="2" height="79" fill="#0000ff" />
<rect x="1021" y="480" width="2" height="79" fill="#0000ff" />
<rect x="1031" y="507" width="2" height="52" fill="#0000ff" />
<rect x="1041" y="507" width="2" height="52" fill="#0000ff" />
<rect x="1051" y="520" width="2" height="39" fill="#0000ff" />
<rect x="1061" y="493" width="2" height="66" fill="#0000ff" />
<rect x="1071" y="533" width="2" height="26" fill="#0000ff" />
<rect x="1081" y="493" width="2" height="66" fill="#0000ff" />
<rect x="1091" y="507" width="2" height="52" fill="#0000ff" />
<rect x="1101" y="493" width="2" height="66" fill="#0000ff" />
<rect x="1111" y="520" width="2" height="39" fill="#0000ff" />
<rect x="1121" y="520" width="2" height="39" fill="#0000ff" />
<rect x="1131" y="507" width="2" height="52" fill="#0000ff" />
<rect x="1141" y="507" width="2" height="52" fill="#0000ff" />
<rect x="1151" y="520" width="2" height="39" fill="#0000ff" />
<rect x="1161" y="467" width="2" height="92" fill="#0000ff" />
<rect x="1171" y="467" width="2" height="92" fill="#0000ff" />
<rect x="1181" y="467" width="2" height="92" fill="#0000ff" />
<rect x="1191" y="467" width="2" height="92" fill="#0000ff" />
<rect x="1201" y="507" width="2" height="52" fill="#0000ff" />
<rect x="1211" y="493" width="2" height="66" fill="#0000ff" />
<rect x="1221" y="520" width="2" height="39" fill="#0000ff" />
<rect x="1231" y="507" width="2" height="52" fill="#0000ff" />
<rect x="1241" y="520" width="2" height="39" fill="#0000ff" />
<rect x="1251" y="493" width="2" height="66" fill="#0000ff" />
<rect x="1261" y="480" width="2" height="79" fill="#0000ff" />
<rect x="1271" y="520" width="2" height="39" fill="#0000ff" />
<rect x="1281" y="507" width="2" height="52" fill="#0000ff" />
<rect x="1291" y="507" width="2" height="52" fill="#0000ff" />
<rect x="1301" y="507" width="2" height="52" fill="#0000ff" />
<rect x="1311" y="520" width="2" height="39" fill="#0000ff" />
<rect x="1321" y="467" width="2" height="92" fill="#0000ff" />
<rect x="1331" y="520" width="2" height="39" fill="#0000ff" />
<rect x="1341" y="507" width="2" height="52" fill="#0000ff" />
<rect x="1351" y="520" width="2" height="39" fill="#0000ff" />
<rect x="1361" y="507" width="2" height="52" fill="#0000ff" />
<rect x="1371" y="520" width="2" height="39" fill="#0000ff" />
<rect x="1381" y="507" width="2" height="52" fill="#0000ff" />
<rect x="1391" y="493" width="2" height="66" fill="#0000ff" />
<rect x="1401" y="520" width="2" height="39" fill="#0000ff" />
<rect x="1411" y="520" width="2" height="39" fill="#0000ff" />
<rect x="1421" y="520" width="2" height="39" fill="#0000ff" />
<rect x="1431" y="520" width="2" height="39" fill="#0000ff" />
<rect x="1441" y="533" width="2" height="26" fill="#0000ff" />
<rect x="1451" y="493" width="2" height="66" fill="#0000ff" />
<rect x="1461" y="520" width="2" height="39" fill="#0000ff" />
<rect x="1471" y="507" width="2" height="52" fill="#0000ff" />
<rect x="1481" y="493" width="2" height="66" fill="#0000ff" />
<rect x="1491" y="454" width="2" height="105" fill="#0000ff" />
<rect x="1501" y="480" width="2" height="79" fill="#0000ff" />
<rect x="1511" y="480" width="2" height="79" fill="#0000ff" />
<rect x="8" y="479" width="1512" height="2" fill="#000" />
</g>
<polyline fill="none" stroke="#ff4500" stroke-width="2" stroke-linejoin="round"  points="22.5,500.6 32.5,502.8 42.5,501.8 52.5,501.6 62.5,499.8 72.5,501.6 82.5,501.6 92.5,500.6 102.5,500.3 112.5,499.3 122.5,496.6 132.5,498.6 142.5,497.3 152.5,497.3 162.5,495.6 172.5,497.6 182.5,495.6 192.5,497.3 202.5,498.3 212.5,498.3 222.5,499.6 232.5,497.3 242.5,497.3 252.5,498.6 262.5,499.6 272.5,497.3 282.5,497.6 292.5,499.3 302.5,499.3 312.5,500.3 322.5,503.8 332.5,502.8 342.5,504.3 352.5,504.3 362.5,505.3 372.5,505.3 382.5,506.3 392.5,506.3 402.5,507.3 412.5,508.5 422.5,508.5 432.5,509.5 442.5,510.5 452.5,509.5 462.5,508.5 472.5,510.5 482.5,508.5 492.5,506.3 502.5,505.3 512.5,506.3 522.5,505.3 532.5,506.3 542.5,506.3 552.5,506.3 562.5,508.5 572.5,507.3 582.5,507.3 592.5,508.5 602.5,508.5 612.5,508.5 622.5,508.5 632.5,509.5 642.5,510.5 652.5,511.5 662.5,512.5 672.5,513.4 682.5,516.7 692.5,518.7 702.5,520.4 712.5,520.4 722.5,521.4 732.5,522.4 742.5,522.4 752.5,522.4 762.5,522.4 772.5,523.6 782.5,524.6 792.5,522.6 802.5,522.6 812.5,522.6 822.5,521.6 832.5,520.4 842.5,521.4 852.5,520.4 862.5,520.4 872.5,520.4 882.5,519.4 892.5,520.4 902.5,518.4 912.5,518.4 922.5,516.4 932.5,514.4 942.5,512.2 952.5,512.2 962.5,513.2 972.5,513.2 982.5,510.5 992.5,510.5 1002.5,508.5 1012.5,506.3 1022.5,505.3 1032.5,505.3 1042.5,504.3 1052.5,504.3 1062.5,502.3 1072.5,503.5 1082.5,502.8 1092.5,500.6 1102.5,501.6 1112.5,501.6 1122.5,503.5 1132.5,503.5 1142.5,503.5 1152.5,504.5 1162.5,501.6 1172.5,499.3 1182.5,499.3 1192.5,497.3 1202.5,498.3 1212.5,499.3 1222.5,501.3 1232.5,501.3 1242.5,501.3 1252.5,500.3 1262.5,499.3 1272.5,499.3 1282.5,499.3 1292.5,499.3 1302.5,500.3 1312.5,500.3 1322.5,497.3 1332.5,498.3 1342.5,498.3 1352.5,498.3 1362.5,500.3 1372.5,503.3 1382.5,505.3 1392.5,506.3 1402.5,506.3 1412.5,508.5 1422.5,508.5 1432.5,508.5 1442.5,509.5 1452.5,509.5 1462.5,511.5 1472.5,510.5 1482.5,510.5 1492.5,507.5 1502.5,506.5 1512.5,504.5"/>
<g shape-rendering="crispEdges">
<rect x="17" y="596" width="1492" height="2" fill="#000" />
</g>
<rect x="17" y="613.4" width="1490" height="2.6" fill="#ffa500"/>
<rect x="17" y="618.6" width="1490" height="1.5" fill="#94855c"/>
<rect x="17" y="664.4" width="1492" height="2.2" fill="#8a8068"/>
<line x1="24" x2="1507" y1="631" y2="631" stroke="#0000ff" stroke-width="2.2" stroke-dasharray="2.7 1.1 2.7 3.5" stroke-dashoffset="-0.5"/>
<line x1="24" x2="1507" y1="642" y2="642" stroke="#000" stroke-width="2" stroke-dasharray="2.7 1.1 2.7 3.5" stroke-dashoffset="-0.5"/>
<line x1="24" x2="1507" y1="654" y2="654" stroke="#0000ff" stroke-width="2.2" stroke-dasharray="2.7 1.1 2.7 3.5" stroke-dashoffset="-0.5"/>
<line x1="21.8" x2="1509" y1="677.7" y2="677.7" stroke="#ff0000" stroke-width="2.2" stroke-dasharray="1.4 1.933"/>
<g shape-rendering="crispEdges">
<rect x="21" y="588" width="3" height="100" fill="#696969" />
<rect x="31" y="588" width="3" height="100" fill="#696969" />
<rect x="41" y="588" width="3" height="100" fill="#696969" />
<rect x="51" y="588" width="3" height="100" fill="#696969" />
<rect x="61" y="588" width="3" height="100" fill="#696969" />
<rect x="71" y="588" width="3" height="100" fill="#696969" />
<rect x="81" y="588" width="3" height="100" fill="#696969" />
<rect x="91" y="588" width="3" height="100" fill="#696969" />
<rect x="101" y="588" width="3" height="100" fill="#696969" />
<rect x="111" y="588" width="3" height="100" fill="#696969" />
<rect x="121" y="588" width="3" height="100" fill="#696969" />
<rect x="131" y="588" width="3" height="100" fill="#696969" />
<rect x="141" y="588" width="3" height="100" fill="#696969" />
<rect x="151" y="588" width="3" height="100" fill="#696969" />
<rect x="161" y="588" width="3" height="100" fill="#696969" />
<rect x="171" y="588" width="3" height="100" fill="#696969" />
<rect x="181" y="588" width="3" height="100" fill="#696969" />
<rect x="191" y="588" width="3" height="100" fill="#696969" />
<rect x="201" y="588" width="3" height="100" fill="#696969" />
<rect x="211" y="588" width="3" height="100" fill="#696969" />
<rect x="221" y="588" width="3" height="100" fill="#696969" />
<rect x="231" y="588" width="3" height="100" fill="#696969" />
<rect x="241" y="588" width="3" height="100" fill="#696969" />
<rect x="251" y="588" width="3" height="100" fill="#696969" />
<rect x="261" y="588" width="3" height="100" fill="#696969" />
<rect x="271" y="588" width="3" height="100" fill="#696969" />
<rect x="281" y="588" width="3" height="100" fill="#696969" />
<rect x="291" y="588" width="3" height="100" fill="#696969" />
<rect x="301" y="588" width="3" height="100" fill="#696969" />
<rect x="311" y="588" width="3" height="100" fill="#696969" />
<rect x="321" y="588" width="3" height="100" fill="#696969" />
<rect x="331" y="588" width="3" height="100" fill="#696969" />
<rect x="341" y="588" width="3" height="100" fill="#696969" />
<rect x="351" y="588" width="3" height="100" fill="#696969" />
<rect x="361" y="588" width="3" height="100" fill="#696969" />
<rect x="371" y="588" width="3" height="100" fill="#696969" />
<rect x="381" y="588" width="3" height="100" fill="#696969" />
<rect x="391" y="588" width="3" height="100" fill="#696969" />
<rect x="401" y="588" width="3" height="100" fill="#696969" />
<rect x="411" y="588" width="3" height="100" fill="#696969" />
<rect x="421" y="588" width="3" height="100" fill="#696969" />
<rect x="431" y="588" width="3" height="100" fill="#696969" />
<rect x="441" y="588" width="3" height="100" fill="#696969" />
<rect x="451" y="588" width="3" height="100" fill="#696969" />
<rect x="461" y="588" width="3" height="100" fill="#696969" />
<rect x="471" y="588" width="3" height="100" fill="#696969" />
<rect x="481" y="588" width="3" height="100" fill="#696969" />
<rect x="491" y="588" width="3" height="100" fill="#696969" />
<rect x="501" y="588" width="3" height="100" fill="#696969" />
<rect x="511" y="588" width="3" height="100" fill="#696969" />
<rect x="521" y="588" width="3" height="100" fill="#696969" />
<rect x="531" y="588" width="3" height="100" fill="#696969" />
<rect x="541" y="588" width="3" height="100" fill="#696969" />
<rect x="551" y="588" width="3" height="100" fill="#696969" />
<rect x="561" y="588" width="3" height="100" fill="#696969" />
<rect x="571" y="588" width="3" height="100" fill="#696969" />
<rect x="581" y="588" width="3" height="100" fill="#696969" />
<rect x="591" y="588" width="3" height="100" fill="#696969" />
<rect x="601" y="588" width="3" height="100" fill="#696969" />
<rect x="611" y="588" width="3" height="100" fill="#696969" />
<rect x="621" y="588" width="3" height="100" fill="#696969" />
<rect x="631" y="588" width="3" height="100" fill="#696969" />
<rect x="641" y="588" width="3" height="100" fill="#696969" />
<rect x="651" y="588" width="3" height="100" fill="#696969" />
<rect x="661" y="588" width="3" height="100" fill="#696969" />
<rect x="671" y="588" width="3" height="100" fill="#696969" />
<rect x="681" y="588" width="3" height="100" fill="#696969" />
<rect x="691" y="588" width="3" height="100" fill="#696969" />
<rect x="701" y="588" width="3" height="100" fill="#696969" />
<rect x="711" y="588" width="3" height="100" fill="#696969" />
<rect x="721" y="588" width="3" height="100" fill="#696969" />
<rect x="731" y="588" width="3" height="100" fill="#696969" />
<rect x="741" y="588" width="3" height="100" fill="#696969" />
<rect x="751" y="588" width="3" height="100" fill="#696969" />
<rect x="761" y="588" width="3" height="100" fill="#696969" />
<rect x="771" y="588" width="3" height="100" fill="#696969" />
<rect x="781" y="588" width="3" height="100" fill="#696969" />
<rect x="791" y="588" width="3" height="100" fill="#696969" />
<rect x="801" y="588" width="3" height="100" fill="#696969" />
<rect x="811" y="588" width="3" height="100" fill="#696969" />
<rect x="821" y="588" width="3" height="100" fill="#696969" />
<rect x="831" y="588" width="3" height="100" fill="#696969" />
<rect x="841" y="588" width="3" height="100" fill="#696969" />
<rect x="851" y="588" width="3" height="100" fill="#696969" />
<rect x="861" y="588" width="3" height="100" fill="#696969" />
<rect x="871" y="588" width="3" height="100" fill="#696969" />
<rect x="881" y="588" width="3" height="100" fill="#696969" />
<rect x="891" y="588" width="3" height="100" fill="#696969" />
<rect x="901" y="588" width="3" height="100" fill="#696969" />
<rect x="911" y="588" width="3" height="100" fill="#696969" />
<rect x="921" y="588" width="3" height="100" fill="#696969" />
<rect x="931" y="588" width="3" height="100" fill="#696969" />
<rect x="941" y="588" width="3" height="100" fill="#696969" />
<rect x="951" y="588" width="3" height="100" fill="#696969" />
<rect x="961" y="588" width="3" height="100" fill="#696969" />
<rect x="971" y="588" width="3" height="100" fill="#696969" />
<rect x="981" y="588" width="3" height="100" fill="#696969" />
<rect x="991" y="588" width="3" height="100" fill="#696969" />
<rect x="1001" y="588" width="3" height="100" fill="#696969" />
<rect x="1011" y="588" width="3" height="100" fill="#696969" />
<rect x="1021" y="588" width="3" height="100" fill="#696969" />
<rect x="1031" y="588" width="3" height="100" fill="#696969" />
<rect x="1041" y="588" width="3" height="100" fill="#696969" />
<rect x="1051" y="588" width="3" height="100" fill="#696969" />
<rect x="1061" y="588" width="3" height="100" fill="#696969" />
<rect x="1071" y="588" width="3" height="100" fill="#696969" />
<rect x="1081" y="588" width="3" height="100" fill="#696969" />
<rect x="1091" y="588" width="3" height="100" fill="#696969" />
<rect x="1101" y="588" width="3" height="100" fill="#696969" />
<rect x="1111" y="588" width="3" height="100" fill="#696969" />
<rect x="1121" y="588" width="3" height="100" fill="#696969" />
<rect x="1131" y="588" width="3" height="100" fill="#696969" />
<rect x="1141" y="588" width="3" height="100" fill="#696969" />
<rect x="1151" y="588" width="3" height="100" fill="#696969" />
<rect x="1161" y="588" width="3" height="100" fill="#696969" />
<rect x="1171" y="588" width="3" height="100" fill="#696969" />
<rect x="1181" y="588" width="3" height="100" fill="#696969" />
<rect x="1191" y="588" width="3" height="100" fill="#696969" />
<rect x="1201" y="588" width="3" height="100" fill="#696969" />
<rect x="1211" y="588" width="3" height="100" fill="#696969" />
<rect x="1221" y="588" width="3" height="100" fill="#696969" />
<rect x="1231" y="588" width="3" height="100" fill="#696969" />
<rect x="1241" y="588" width="3" height="100" fill="#696969" />
<rect x="1251" y="588" width="3" height="100" fill="#696969" />
<rect x="1261" y="588" width="3" height="100" fill="#696969" />
<rect x="1271" y="588" width="3" height="100" fill="#696969" />
<rect x="1281" y="588" width="3" height="100" fill="#696969" />
<rect x="1291" y="588" width="3" height="100" fill="#696969" />
<rect x="1301" y="588" width="3" height="100" fill="#696969" />
<rect x="1311" y="588" width="3" height="100" fill="#696969" />
<rect x="1321" y="588" width="3" height="100" fill="#696969" />
<rect x="1331" y="588" width="3" height="100" fill="#696969" />
<rect x="1341" y="588" width="3" height="100" fill="#696969" />
<rect x="1351" y="588" width="3" height="100" fill="#696969" />
<rect x="1361" y="588" width="3" height="100" fill="#696969" />
<rect x="1371" y="588" width="3" height="100" fill="#696969" />
<rect x="1381" y="588" width="3" height="100" fill="#696969" />
<rect x="1391" y="588" width="3" height="100" fill="#696969" />
<rect x="1401" y="588" width="3" height="100" fill="#696969" />
<rect x="1411" y="588" width="3" height="100" fill="#696969" />
<rect x="1421" y="588" width="3" height="100" fill="#696969" />
<rect x="1431" y="588" width="3" height="100" fill="#696969" />
<rect x="1441" y="588" width="3" height="100" fill="#696969" />
<rect x="1451" y="588" width="3" height="100" fill="#696969" />
<rect x="1461" y="588" width="3" height="100" fill="#696969" />
<rect x="1471" y="588" width="3" height="100" fill="#696969" />
<rect x="1481" y="588" width="3" height="100" fill="#696969" />
<rect x="1491" y="588" width="3" height="100" fill="#696969" />
<rect x="1501" y="588" width="3" height="100" fill="#696969" />
<rect x="18" y="579" width="1489" height="9" fill="#000" />
<rect x="27" y="579" width="1" height="9" fill="#6b4f0c" />
<rect x="37" y="579" width="1" height="9" fill="#6b4f0c" />
<rect x="47" y="579" width="1" height="9" fill="#6b4f0c" />
<rect x="57" y="579" width="1" height="9" fill="#6b4f0c" />
<rect x="67" y="579" width="1" height="9" fill="#6b4f0c" />
<rect x="77" y="579" width="1" height="9" fill="#6b4f0c" />
<rect x="87" y="579" width="1" height="9" fill="#6b4f0c" />
<rect x="97" y="579" width="1" height="9" fill="#6b4f0c" />
<rect x="107" y="579" width="1" height="9" fill="#6b4f0c" />
<rect x="117" y="579" width="1" height="9" fill="#6b4f0c" />
<rect x="127" y="579" width="1" height="9" fill="#6b4f0c" />
<rect x="137" y="579" width="1" height="9" fill="#6b4f0c" />
<rect x="147" y="579" width="1" height="9" fill="#6b4f0c" />
<rect x="157" y="579" width="1" height="9" fill="#6b4f0c" />
<rect x="167" y="579" width="1" height="9" fill="#6b4f0c" />
<rect x="177" y="579" width="1" height="9" fill="#6b4f0c" />
<rect x="187" y="579" width="1" height="9" fill="#6b4f0c" />
<rect x="197" y="579" width="1" height="9" fill="#6b4f0c" />
<rect x="207" y="579" width="1" height="9" fill="#6b4f0c" />
<rect x="217" y="579" width="1" height="9" fill="#6b4f0c" />
<rect x="227" y="579" width="1" height="9" fill="#6b4f0c" />
<rect x="237" y="579" width="1" height="9" fill="#6b4f0c" />
<rect x="247" y="579" width="1" height="9" fill="#6b4f0c" />
<rect x="257" y="579" width="1" height="9" fill="#6b4f0c" />
<rect x="267" y="579" width="1" height="9" fill="#6b4f0c" />
<rect x="277" y="579" width="1" height="9" fill="#6b4f0c" />
<rect x="287" y="579" width="1" height="9" fill="#6b4f0c" />
<rect x="297" y="579" width="1" height="9" fill="#6b4f0c" />
<rect x="307" y="579" width="1" height="9" fill="#6b4f0c" />
<rect x="317" y="579" width="1" height="9" fill="#6b4f0c" />
<rect x="327" y="579" width="1" height="9" fill="#6b4f0c" />
<rect x="337" y="579" width="1" height="9" fill="#6b4f0c" />
<rect x="347" y="579" width="1" height="9" fill="#6b4f0c" />
<rect x="357" y="579" width="1" height="9" fill="#6b4f0c" />
<rect x="367" y="579" width="1" height="9" fill="#6b4f0c" />
<rect x="377" y="579" width="1" height="9" fill="#6b4f0c" />
<rect x="387" y="579" width="1" height="9" fill="#6b4f0c" />
<rect x="397" y="579" width="1" height="9" fill="#6b4f0c" />
<rect x="407" y="579" width="1" height="9" fill="#6b4f0c" />
<rect x="417" y="579" width="1" height="9" fill="#6b4f0c" />
<rect x="427" y="579" width="1" height="9" fill="#6b4f0c" />
<rect x="437" y="579" width="1" height="9" fill="#6b4f0c" />
<rect x="447" y="579" width="1" height="9" fill="#6b4f0c" />
<rect x="457" y="579" width="1" height="9" fill="#6b4f0c" />
<rect x="467" y="579" width="1" height="9" fill="#6b4f0c" />
<rect x="477" y="579" width="1" height="9" fill="#6b4f0c" />
<rect x="487" y="579" width="1" height="9" fill="#6b4f0c" />
<rect x="497" y="579" width="1" height="9" fill="#6b4f0c" />
<rect x="507" y="579" width="1" height="9" fill="#6b4f0c" />
<rect x="517" y="579" width="1" height="9" fill="#6b4f0c" />
<rect x="527" y="579" width="1" height="9" fill="#6b4f0c" />
<rect x="537" y="579" width="1" height="9" fill="#6b4f0c" />
<rect x="547" y="579" width="1" height="9" fill="#6b4f0c" />
<rect x="557" y="579" width="1" height="9" fill="#6b4f0c" />
<rect x="567" y="579" width="1" height="9" fill="#6b4f0c" />
<rect x="577" y="579" width="1" height="9" fill="#6b4f0c" />
<rect x="587" y="579" width="1" height="9" fill="#6b4f0c" />
<rect x="597" y="579" width="1" height="9" fill="#6b4f0c" />
<rect x="607" y="579" width="1" height="9" fill="#6b4f0c" />
<rect x="617" y="579" width="1" height="9" fill="#6b4f0c" />
<rect x="627" y="579" width="1" height="9" fill="#6b4f0c" />
<rect x="637" y="579" width="1" height="9" fill="#6b4f0c" />
<rect x="647" y="579" width="1" height="9" fill="#6b4f0c" />
<rect x="657" y="579" width="1" height="9" fill="#6b4f0c" />
<rect x="667" y="579" width="1" height="9" fill="#6b4f0c" />
<rect x="677" y="579" width="1" height="9" fill="#6b4f0c" />
<rect x="687" y="579" width="1" height="9" fill="#6b4f0c" />
<rect x="697" y="579" width="1" height="9" fill="#6b4f0c" />
<rect x="707" y="579" width="1" height="9" fill="#6b4f0c" />
<rect x="717" y="579" width="1" height="9" fill="#6b4f0c" />
<rect x="727" y="579" width="1" height="9" fill="#6b4f0c" />
<rect x="737" y="579" width="1" height="9" fill="#6b4f0c" />
<rect x="747" y="579" width="1" height="9" fill="#6b4f0c" />
<rect x="757" y="579" width="1" height="9" fill="#6b4f0c" />
<rect x="767" y="579" width="1" height="9" fill="#6b4f0c" />
<rect x="777" y="579" width="1" height="9" fill="#6b4f0c" />
<rect x="787" y="579" width="1" height="9" fill="#6b4f0c" />
<rect x="797" y="579" width="1" height="9" fill="#6b4f0c" />
<rect x="807" y="579" width="1" height="9" fill="#6b4f0c" />
<rect x="817" y="579" width="1" height="9" fill="#6b4f0c" />
<rect x="827" y="579" width="1" height="9" fill="#6b4f0c" />
<rect x="837" y="579" width="1" height="9" fill="#6b4f0c" />
<rect x="847" y="579" width="1" height="9" fill="#6b4f0c" />
<rect x="857" y="579" width="1" height="9" fill="#6b4f0c" />
<rect x="867" y="579" width="1" height="9" fill="#6b4f0c" />
<rect x="877" y="579" width="1" height="9" fill="#6b4f0c" />
<rect x="887" y="579" width="1" height="9" fill="#6b4f0c" />
<rect x="897" y="579" width="1" height="9" fill="#6b4f0c" />
<rect x="907" y="579" width="1" height="9" fill="#6b4f0c" />
<rect x="917" y="579" width="1" height="9" fill="#6b4f0c" />
<rect x="927" y="579" width="1" height="9" fill="#6b4f0c" />
<rect x="937" y="579" width="1" height="9" fill="#6b4f0c" />
<rect x="947" y="579" width="1" height="9" fill="#6b4f0c" />
<rect x="957" y="579" width="1" height="9" fill="#6b4f0c" />
<rect x="967" y="579" width="1" height="9" fill="#6b4f0c" />
<rect x="977" y="579" width="1" height="9" fill="#6b4f0c" />
<rect x="987" y="579" width="1" height="9" fill="#6b4f0c" />
<rect x="997" y="579" width="1" height="9" fill="#6b4f0c" />
<rect x="1007" y="579" width="1" height="9" fill="#6b4f0c" />
<rect x="1017" y="579" width="1" height="9" fill="#6b4f0c" />
<rect x="1027" y="579" width="1" height="9" fill="#6b4f0c" />
<rect x="1037" y="579" width="1" height="9" fill="#6b4f0c" />
<rect x="1047" y="579" width="1" height="9" fill="#6b4f0c" />
<rect x="1057" y="579" width="1" height="9" fill="#6b4f0c" />
<rect x="1067" y="579" width="1" height="9" fill="#6b4f0c" />
<rect x="1077" y="579" width="1" height="9" fill="#6b4f0c" />
<rect x="1087" y="579" width="1" height="9" fill="#6b4f0c" />
<rect x="1097" y="579" width="1" height="9" fill="#6b4f0c" />
<rect x="1107" y="579" width="1" height="9" fill="#6b4f0c" />
<rect x="1117" y="579" width="1" height="9" fill="#6b4f0c" />
<rect x="1127" y="579" width="1" height="9" fill="#6b4f0c" />
<rect x="1137" y="579" width="1" height="9" fill="#6b4f0c" />
<rect x="1147" y="579" width="1" height="9" fill="#6b4f0c" />
<rect x="1157" y="579" width="1" height="9" fill="#6b4f0c" />
<rect x="1167" y="579" width="1" height="9" fill="#6b4f0c" />
<rect x="1177" y="579" width="1" height="9" fill="#6b4f0c" />
<rect x="1187" y="579" width="1" height="9" fill="#6b4f0c" />
<rect x="1197" y="579" width="1" height="9" fill="#6b4f0c" />
<rect x="1207" y="579" width="1" height="9" fill="#6b4f0c" />
<rect x="1217" y="579" width="1" height="9" fill="#6b4f0c" />
<rect x="1227" y="579" width="1" height="9" fill="#6b4f0c" />
<rect x="1237" y="579" width="1" height="9" fill="#6b4f0c" />
<rect x="1247" y="579" width="1" height="9" fill="#6b4f0c" />
<rect x="1257" y="579" width="1" height="9" fill="#6b4f0c" />
<rect x="1267" y="579" width="1" height="9" fill="#6b4f0c" />
<rect x="1277" y="579" width="1" height="9" fill="#6b4f0c" />
<rect x="1287" y="579" width="1" height="9" fill="#6b4f0c" />
<rect x="1297" y="579" width="1" height="9" fill="#6b4f0c" />
<rect x="1307" y="579" width="1" height="9" fill="#6b4f0c" />
<rect x="1317" y="579" width="1" height="9" fill="#6b4f0c" />
<rect x="1327" y="579" width="1" height="9" fill="#6b4f0c" />
<rect x="1337" y="579" width="1" height="9" fill="#6b4f0c" />
<rect x="1347" y="579" width="1" height="9" fill="#6b4f0c" />
<rect x="1357" y="579" width="1" height="9" fill="#6b4f0c" />
<rect x="1367" y="579" width="1" height="9" fill="#6b4f0c" />
<rect x="1377" y="579" width="1" height="9" fill="#6b4f0c" />
<rect x="1387" y="579" width="1" height="9" fill="#6b4f0c" />
<rect x="1397" y="579" width="1" height="9" fill="#6b4f0c" />
<rect x="1407" y="579" width="1" height="9" fill="#6b4f0c" />
<rect x="1417" y="579" width="1" height="9" fill="#6b4f0c" />
<rect x="1427" y="579" width="1" height="9" fill="#6b4f0c" />
<rect x="1437" y="579" width="1" height="9" fill="#6b4f0c" />
<rect x="1447" y="579" width="1" height="9" fill="#6b4f0c" />
<rect x="1457" y="579" width="1" height="9" fill="#6b4f0c" />
<rect x="1467" y="579" width="1" height="9" fill="#6b4f0c" />
<rect x="1477" y="579" width="1" height="9" fill="#6b4f0c" />
<rect x="1487" y="579" width="1" height="9" fill="#6b4f0c" />
<rect x="1497" y="579" width="1" height="9" fill="#6b4f0c" />
</g>
<g shape-rendering="crispEdges">
<rect x="24" y="755" width="1476" height="2" fill="#a9a9a9" />
<rect x="24" y="766" width="1476" height="1" fill="#0000ff" />
<rect x="24" y="776" width="1476" height="1" fill="#8b5a00" />
<rect x="24" y="786" width="1476" height="1" fill="#0000ff" />
<rect x="24" y="797" width="1476" height="2" fill="#a9a9a9" />
<rect x="24" y="807" width="1476" height="1" fill="#ff0000" />
<rect x="20" y="712" width="4" height="105" fill="#0000ff" />
<rect x="30" y="712" width="4" height="105" fill="#0000ff" />
<rect x="40" y="712" width="4" height="105" fill="#0000ff" />
<rect x="50" y="712" width="4" height="105" fill="#0000ff" />
<rect x="60" y="712" width="4" height="105" fill="#0000ff" />
<rect x="70" y="712" width="4" height="105" fill="#0000ff" />
<rect x="80" y="712" width="4" height="105" fill="#0000ff" />
<rect x="90" y="712" width="4" height="105" fill="#0000ff" />
<rect x="100" y="712" width="4" height="105" fill="#0000ff" />
<rect x="110" y="712" width="4" height="105" fill="#0000ff" />
<rect x="120" y="712" width="4" height="105" fill="#0000ff" />
<rect x="130" y="712" width="4" height="105" fill="#0000ff" />
<rect x="140" y="712" width="4" height="105" fill="#0000ff" />
<rect x="150" y="712" width="4" height="105" fill="#0000ff" />
<rect x="160" y="712" width="4" height="105" fill="#0000ff" />
<rect x="170" y="712" width="4" height="105" fill="#0000ff" />
<rect x="180" y="712" width="4" height="105" fill="#0000ff" />
<rect x="190" y="712" width="4" height="105" fill="#0000ff" />
<rect x="200" y="712" width="4" height="105" fill="#0000ff" />
<rect x="210" y="712" width="4" height="105" fill="#0000ff" />
<rect x="220" y="712" width="4" height="105" fill="#0000ff" />
<rect x="230" y="712" width="4" height="105" fill="#0000ff" />
<rect x="240" y="712" width="4" height="105" fill="#0000ff" />
<rect x="250" y="712" width="4" height="105" fill="#0000ff" />
<rect x="260" y="712" width="4" height="105" fill="#0000ff" />
<rect x="270" y="712" width="4" height="105" fill="#0000ff" />
<rect x="280" y="712" width="4" height="105" fill="#0000ff" />
<rect x="290" y="712" width="4" height="105" fill="#0000ff" />
<rect x="300" y="712" width="4" height="105" fill="#0000ff" />
<rect x="310" y="712" width="4" height="105" fill="#0000ff" />
<rect x="320" y="712" width="4" height="105" fill="#0000ff" />
<rect x="330" y="712" width="4" height="105" fill="#0000ff" />
<rect x="340" y="712" width="4" height="105" fill="#0000ff" />
<rect x="350" y="712" width="4" height="105" fill="#0000ff" />
<rect x="360" y="712" width="4" height="105" fill="#0000ff" />
<rect x="370" y="712" width="4" height="105" fill="#0000ff" />
<rect x="380" y="712" width="4" height="105" fill="#0000ff" />
<rect x="390" y="712" width="4" height="105" fill="#0000ff" />
<rect x="400" y="712" width="4" height="105" fill="#0000ff" />
<rect x="410" y="712" width="4" height="105" fill="#0000ff" />
<rect x="420" y="712" width="4" height="105" fill="#0000ff" />
<rect x="430" y="712" width="4" height="105" fill="#0000ff" />
<rect x="440" y="712" width="4" height="105" fill="#0000ff" />
<rect x="450" y="712" width="4" height="105" fill="#0000ff" />
<rect x="460" y="712" width="4" height="105" fill="#0000ff" />
<rect x="470" y="712" width="4" height="105" fill="#0000ff" />
<rect x="480" y="712" width="4" height="105" fill="#0000ff" />
<rect x="490" y="712" width="4" height="105" fill="#0000ff" />
<rect x="500" y="712" width="4" height="105" fill="#0000ff" />
<rect x="510" y="712" width="4" height="105" fill="#0000ff" />
<rect x="520" y="712" width="4" height="105" fill="#0000ff" />
<rect x="530" y="712" width="4" height="105" fill="#0000ff" />
<rect x="540" y="712" width="4" height="105" fill="#0000ff" />
<rect x="550" y="712" width="4" height="105" fill="#0000ff" />
<rect x="560" y="712" width="4" height="105" fill="#0000ff" />
<rect x="570" y="712" width="4" height="105" fill="#0000ff" />
<rect x="580" y="712" width="4" height="105" fill="#0000ff" />
<rect x="590" y="712" width="4" height="105" fill="#0000ff" />
<rect x="600" y="712" width="4" height="105" fill="#0000ff" />
<rect x="610" y="712" width="4" height="105" fill="#0000ff" />
<rect x="620" y="712" width="4" height="105" fill="#0000ff" />
<rect x="630" y="712" width="4" height="105" fill="#0000ff" />
<rect x="640" y="712" width="4" height="105" fill="#0000ff" />
<rect x="650" y="712" width="4" height="105" fill="#0000ff" />
<rect x="660" y="712" width="4" height="105" fill="#0000ff" />
<rect x="670" y="712" width="4" height="105" fill="#0000ff" />
<rect x="680" y="712" width="4" height="105" fill="#0000ff" />
<rect x="690" y="712" width="4" height="105" fill="#0000ff" />
<rect x="700" y="712" width="4" height="105" fill="#0000ff" />
<rect x="710" y="712" width="4" height="105" fill="#0000ff" />
<rect x="720" y="712" width="4" height="105" fill="#0000ff" />
<rect x="730" y="712" width="4" height="105" fill="#0000ff" />
<rect x="740" y="712" width="4" height="105" fill="#0000ff" />
<rect x="750" y="712" width="4" height="105" fill="#0000ff" />
<rect x="760" y="712" width="4" height="105" fill="#0000ff" />
<rect x="770" y="712" width="4" height="105" fill="#0000ff" />
<rect x="780" y="712" width="4" height="105" fill="#0000ff" />
<rect x="790" y="712" width="4" height="105" fill="#0000ff" />
<rect x="800" y="712" width="4" height="105" fill="#0000ff" />
<rect x="810" y="712" width="4" height="105" fill="#0000ff" />
<rect x="820" y="712" width="4" height="105" fill="#0000ff" />
<rect x="830" y="712" width="4" height="105" fill="#0000ff" />
<rect x="840" y="712" width="4" height="105" fill="#0000ff" />
<rect x="850" y="712" width="4" height="105" fill="#0000ff" />
<rect x="860" y="712" width="4" height="105" fill="#0000ff" />
<rect x="870" y="712" width="4" height="105" fill="#0000ff" />
<rect x="880" y="712" width="4" height="105" fill="#0000ff" />
<rect x="890" y="712" width="4" height="105" fill="#0000ff" />
<rect x="900" y="712" width="4" height="105" fill="#0000ff" />
<rect x="910" y="712" width="4" height="105" fill="#0000ff" />
<rect x="920" y="712" width="4" height="105" fill="#0000ff" />
<rect x="930" y="712" width="4" height="105" fill="#0000ff" />
<rect x="940" y="712" width="4" height="105" fill="#0000ff" />
<rect x="950" y="712" width="4" height="105" fill="#0000ff" />
<rect x="960" y="712" width="4" height="105" fill="#0000ff" />
<rect x="970" y="712" width="4" height="105" fill="#0000ff" />
<rect x="980" y="712" width="4" height="105" fill="#0000ff" />
<rect x="990" y="712" width="4" height="105" fill="#0000ff" />
<rect x="1000" y="712" width="4" height="105" fill="#0000ff" />
<rect x="1010" y="712" width="4" height="105" fill="#0000ff" />
<rect x="1020" y="712" width="4" height="105" fill="#0000ff" />
<rect x="1030" y="712" width="4" height="105" fill="#0000ff" />
<rect x="1040" y="712" width="4" height="105" fill="#0000ff" />
<rect x="1050" y="712" width="4" height="105" fill="#0000ff" />
<rect x="1060" y="712" width="4" height="105" fill="#0000ff" />
<rect x="1070" y="712" width="4" height="105" fill="#0000ff" />
<rect x="1080" y="712" width="4" height="105" fill="#0000ff" />
<rect x="1090" y="712" width="4" height="105" fill="#0000ff" />
<rect x="1100" y="712" width="4" height="105" fill="#0000ff" />
<rect x="1110" y="712" width="4" height="105" fill="#0000ff" />
<rect x="1120" y="712" width="4" height="105" fill="#0000ff" />
<rect x="1130" y="712" width="4" height="105" fill="#0000ff" />
<rect x="1140" y="712" width="4" height="105" fill="#0000ff" />
<rect x="1150" y="712" width="4" height="105" fill="#0000ff" />
<rect x="1160" y="712" width="4" height="105" fill="#0000ff" />
<rect x="1170" y="712" width="4" height="105" fill="#0000ff" />
<rect x="1180" y="712" width="4" height="105" fill="#0000ff" />
<rect x="1190" y="712" width="4" height="105" fill="#0000ff" />
<rect x="1200" y="712" width="4" height="105" fill="#0000ff" />
<rect x="1210" y="712" width="4" height="105" fill="#0000ff" />
<rect x="1220" y="712" width="4" height="105" fill="#0000ff" />
<rect x="1230" y="712" width="4" height="105" fill="#0000ff" />
<rect x="1240" y="712" width="4" height="105" fill="#0000ff" />
<rect x="1250" y="712" width="4" height="105" fill="#0000ff" />
<rect x="1260" y="712" width="4" height="105" fill="#0000ff" />
<rect x="1270" y="712" width="4" height="105" fill="#0000ff" />
<rect x="1280" y="712" width="4" height="105" fill="#0000ff" />
<rect x="1290" y="712" width="4" height="105" fill="#0000ff" />
<rect x="1300" y="712" width="4" height="105" fill="#0000ff" />
<rect x="1310" y="712" width="4" height="105" fill="#0000ff" />
<rect x="1320" y="712" width="4" height="105" fill="#0000ff" />
<rect x="1330" y="712" width="4" height="105" fill="#0000ff" />
<rect x="1340" y="712" width="4" height="105" fill="#0000ff" />
<rect x="1350" y="712" width="4" height="105" fill="#0000ff" />
<rect x="1360" y="712" width="4" height="105" fill="#0000ff" />
<rect x="1370" y="712" width="4" height="105" fill="#0000ff" />
<rect x="1380" y="712" width="4" height="105" fill="#0000ff" />
<rect x="1390" y="712" width="4" height="105" fill="#0000ff" />
<rect x="1400" y="712" width="4" height="105" fill="#0000ff" />
<rect x="1410" y="712" width="4" height="105" fill="#0000ff" />
<rect x="1420" y="712" width="4" height="105" fill="#0000ff" />
<rect x="1430" y="712" width="4" height="105" fill="#0000ff" />
<rect x="1440" y="712" width="4" height="105" fill="#0000ff" />
<rect x="1450" y="712" width="4" height="105" fill="#0000ff" />
<rect x="1460" y="712" width="4" height="105" fill="#0000ff" />
<rect x="1470" y="712" width="4" height="105" fill="#0000ff" />
<rect x="1480" y="712" width="4" height="105" fill="#0000ff" />
<rect x="1490" y="712" width="4" height="105" fill="#0000ff" />
<rect x="1500" y="712" width="4" height="105" fill="#0000ff" />
</g>
<line x1="22" x2="22" y1="777" y2="817" stroke="#8496f5" stroke-width="1" stroke-dasharray="1 1" shape-rendering="crispEdges"/>
<line x1="32" x2="32" y1="777" y2="817" stroke="#8496f5" stroke-width="1" stroke-dasharray="1 1" shape-rendering="crispEdges"/>
<line x1="42" x2="42" y1="777" y2="817" stroke="#8496f5" stroke-width="1" stroke-dasharray="1 1" shape-rendering="crispEdges"/>
<line x1="52" x2="52" y1="777" y2="817" stroke="#8496f5" stroke-width="1" stroke-dasharray="1 1" shape-rendering="crispEdges"/>
<line x1="62" x2="62" y1="777" y2="817" stroke="#8496f5" stroke-width="1" stroke-dasharray="1 1" shape-rendering="crispEdges"/>
<line x1="72" x2="72" y1="777" y2="817" stroke="#8496f5" stroke-width="1" stroke-dasharray="1 1" shape-rendering="crispEdges"/>
<line x1="82" x2="82" y1="777" y2="817" stroke="#8496f5" stroke-width="1" stroke-dasharray="1 1" shape-rendering="crispEdges"/>
<line x1="92" x2="92" y1="777" y2="817" stroke="#8496f5" stroke-width="1" stroke-dasharray="1 1" shape-rendering="crispEdges"/>
<line x1="102" x2="102" y1="777" y2="817" stroke="#8496f5" stroke-width="1" stroke-dasharray="1 1" shape-rendering="crispEdges"/>
<line x1="112" x2="112" y1="777" y2="817" stroke="#8496f5" stroke-width="1" stroke-dasharray="1 1" shape-rendering="crispEdges"/>
<line x1="122" x2="122" y1="777" y2="817" stroke="#8496f5" stroke-width="1" stroke-dasharray="1 1" shape-rendering="crispEdges"/>
<line x1="132" x2="132" y1="777" y2="817" stroke="#8496f5" stroke-width="1" stroke-dasharray="1 1" shape-rendering="crispEdges"/>
<line x1="142" x2="142" y1="777" y2="817" stroke="#8496f5" stroke-width="1" stroke-dasharray="1 1" shape-rendering="crispEdges"/>
<line x1="152" x2="152" y1="777" y2="817" stroke="#8496f5" stroke-width="1" stroke-dasharray="1 1" shape-rendering="crispEdges"/>
<line x1="162" x2="162" y1="777" y2="817" stroke="#8496f5" stroke-width="1" stroke-dasharray="1 1" shape-rendering="crispEdges"/>
<line x1="172" x2="172" y1="777" y2="817" stroke="#8496f5" stroke-width="1" stroke-dasharray="1 1" shape-rendering="crispEdges"/>
<line x1="182" x2="182" y1="777" y2="817" stroke="#8496f5" stroke-width="1" stroke-dasharray="1 1" shape-rendering="crispEdges"/>
<line x1="192" x2="192" y1="777" y2="817" stroke="#8496f5" stroke-width="1" stroke-dasharray="1 1" shape-rendering="crispEdges"/>
<line x1="202" x2="202" y1="777" y2="817" stroke="#8496f5" stroke-width="1" stroke-dasharray="1 1" shape-rendering="crispEdges"/>
<line x1="212" x2="212" y1="777" y2="817" stroke="#8496f5" stroke-width="1" stroke-dasharray="1 1" shape-rendering="crispEdges"/>
<line x1="222" x2="222" y1="777" y2="817" stroke="#8496f5" stroke-width="1" stroke-dasharray="1 1" shape-rendering="crispEdges"/>
<line x1="232" x2="232" y1="777" y2="817" stroke="#8496f5" stroke-width="1" stroke-dasharray="1 1" shape-rendering="crispEdges"/>
<line x1="242" x2="242" y1="777" y2="817" stroke="#8496f5" stroke-width="1" stroke-dasharray="1 1" shape-rendering="crispEdges"/>
<line x1="252" x2="252" y1="777" y2="817" stroke="#8496f5" stroke-width="1" stroke-dasharray="1 1" shape-rendering="crispEdges"/>
<line x1="262" x2="262" y1="777" y2="817" stroke="#8496f5" stroke-width="1" stroke-dasharray="1 1" shape-rendering="crispEdges"/>
<line x1="272" x2="272" y1="777" y2="817" stroke="#8496f5" stroke-width="1" stroke-dasharray="1 1" shape-rendering="crispEdges"/>
<line x1="282" x2="282" y1="777" y2="817" stroke="#8496f5" stroke-width="1" stroke-dasharray="1 1" shape-rendering="crispEdges"/>
<line x1="292" x2="292" y1="777" y2="817" stroke="#8496f5" stroke-width="1" stroke-dasharray="1 1" shape-rendering="crispEdges"/>
<line x1="302" x2="302" y1="777" y2="817" stroke="#8496f5" stroke-width="1" stroke-dasharray="1 1" shape-rendering="crispEdges"/>
<line x1="312" x2="312" y1="777" y2="817" stroke="#8496f5" stroke-width="1" stroke-dasharray="1 1" shape-rendering="crispEdges"/>
<line x1="322" x2="322" y1="777" y2="817" stroke="#8496f5" stroke-width="1" stroke-dasharray="1 1" shape-rendering="crispEdges"/>
<line x1="332" x2="332" y1="777" y2="817" stroke="#8496f5" stroke-width="1" stroke-dasharray="1 1" shape-rendering="crispEdges"/>
<line x1="342" x2="342" y1="777" y2="817" stroke="#8496f5" stroke-width="1" stroke-dasharray="1 1" shape-rendering="crispEdges"/>
<line x1="352" x2="352" y1="777" y2="817" stroke="#8496f5" stroke-width="1" stroke-dasharray="1 1" shape-rendering="crispEdges"/>
<line x1="362" x2="362" y1="777" y2="817" stroke="#8496f5" stroke-width="1" stroke-dasharray="1 1" shape-rendering="crispEdges"/>
<line x1="372" x2="372" y1="777" y2="817" stroke="#8496f5" stroke-width="1" stroke-dasharray="1 1" shape-rendering="crispEdges"/>
<line x1="382" x2="382" y1="777" y2="817" stroke="#8496f5" stroke-width="1" stroke-dasharray="1 1" shape-rendering="crispEdges"/>
<line x1="392" x2="392" y1="777" y2="817" stroke="#8496f5" stroke-width="1" stroke-dasharray="1 1" shape-rendering="crispEdges"/>
<line x1="402" x2="402" y1="777" y2="817" stroke="#8496f5" stroke-width="1" stroke-dasharray="1 1" shape-rendering="crispEdges"/>
<line x1="412" x2="412" y1="777" y2="817" stroke="#8496f5" stroke-width="1" stroke-dasharray="1 1" shape-rendering="crispEdges"/>
<line x1="422" x2="422" y1="777" y2="817" stroke="#8496f5" stroke-width="1" stroke-dasharray="1 1" shape-rendering="crispEdges"/>
<line x1="432" x2="432" y1="777" y2="817" stroke="#8496f5" stroke-width="1" stroke-dasharray="1 1" shape-rendering="crispEdges"/>
<line x1="442" x2="442" y1="777" y2="817" stroke="#8496f5" stroke-width="1" stroke-dasharray="1 1" shape-rendering="crispEdges"/>
<line x1="452" x2="452" y1="777" y2="817" stroke="#8496f5" stroke-width="1" stroke-dasharray="1 1" shape-rendering="crispEdges"/>
<line x1="462" x2="462" y1="777" y2="817" stroke="#8496f5" stroke-width="1" stroke-dasharray="1 1" shape-rendering="crispEdges"/>
<line x1="472" x2="472" y1="777" y2="817" stroke="#8496f5" stroke-width="1" stroke-dasharray="1 1" shape-rendering="crispEdges"/>
<line x1="482" x2="482" y1="777" y2="817" stroke="#8496f5" stroke-width="1" stroke-dasharray="1 1" shape-rendering="crispEdges"/>
<line x1="492" x2="492" y1="777" y2="817" stroke="#8496f5" stroke-width="1" stroke-dasharray="1 1" shape-rendering="crispEdges"/>
<line x1="502" x2="502" y1="777" y2="817" stroke="#8496f5" stroke-width="1" stroke-dasharray="1 1" shape-rendering="crispEdges"/>
<line x1="512" x2="512" y1="777" y2="817" stroke="#8496f5" stroke-width="1" stroke-dasharray="1 1" shape-rendering="crispEdges"/>
<line x1="522" x2="522" y1="777" y2="817" stroke="#8496f5" stroke-width="1" stroke-dasharray="1 1" shape-rendering="crispEdges"/>
<line x1="532" x2="532" y1="777" y2="817" stroke="#8496f5" stroke-width="1" stroke-dasharray="1 1" shape-rendering="crispEdges"/>
<line x1="542" x2="542" y1="777" y2="817" stroke="#8496f5" stroke-width="1" stroke-dasharray="1 1" shape-rendering="crispEdges"/>
<line x1="552" x2="552" y1="777" y2="817" stroke="#8496f5" stroke-width="1" stroke-dasharray="1 1" shape-rendering="crispEdges"/>
<line x1="562" x2="562" y1="777" y2="817" stroke="#8496f5" stroke-width="1" stroke-dasharray="1 1" shape-rendering="crispEdges"/>
<line x1="572" x2="572" y1="777" y2="817" stroke="#8496f5" stroke-width="1" stroke-dasharray="1 1" shape-rendering="crispEdges"/>
<line x1="582" x2="582" y1="777" y2="817" stroke="#8496f5" stroke-width="1" stroke-dasharray="1 1" shape-rendering="crispEdges"/>
<line x1="592" x2="592" y1="777" y2="817" stroke="#8496f5" stroke-width="1" stroke-dasharray="1 1" shape-rendering="crispEdges"/>
<line x1="602" x2="602" y1="777" y2="817" stroke="#8496f5" stroke-width="1" stroke-dasharray="1 1" shape-rendering="crispEdges"/>
<line x1="612" x2="612" y1="777" y2="817" stroke="#8496f5" stroke-width="1" stroke-dasharray="1 1" shape-rendering="crispEdges"/>
<line x1="622" x2="622" y1="777" y2="817" stroke="#8496f5" stroke-width="1" stroke-dasharray="1 1" shape-rendering="crispEdges"/>
<line x1="632" x2="632" y1="777" y2="817" stroke="#8496f5" stroke-width="1" stroke-dasharray="1 1" shape-rendering="crispEdges"/>
<line x1="642" x2="642" y1="777" y2="817" stroke="#8496f5" stroke-width="1" stroke-dasharray="1 1" shape-rendering="crispEdges"/>
<line x1="652" x2="652" y1="777" y2="817" stroke="#8496f5" stroke-width="1" stroke-dasharray="1 1" shape-rendering="crispEdges"/>
<line x1="662" x2="662" y1="777" y2="817" stroke="#8496f5" stroke-width="1" stroke-dasharray="1 1" shape-rendering="crispEdges"/>
<line x1="672" x2="672" y1="777" y2="817" stroke="#8496f5" stroke-width="1" stroke-dasharray="1 1" shape-rendering="crispEdges"/>
<line x1="682" x2="682" y1="777" y2="817" stroke="#8496f5" stroke-width="1" stroke-dasharray="1 1" shape-rendering="crispEdges"/>
<line x1="692" x2="692" y1="777" y2="817" stroke="#8496f5" stroke-width="1" stroke-dasharray="1 1" shape-rendering="crispEdges"/>
<line x1="702" x2="702" y1="777" y2="817" stroke="#8496f5" stroke-width="1" stroke-dasharray="1 1" shape-rendering="crispEdges"/>
<line x1="712" x2="712" y1="777" y2="817" stroke="#8496f5" stroke-width="1" stroke-dasharray="1 1" shape-rendering="crispEdges"/>
<line x1="722" x2="722" y1="777" y2="817" stroke="#8496f5" stroke-width="1" stroke-dasharray="1 1" shape-rendering="crispEdges"/>
<line x1="732" x2="732" y1="777" y2="817" stroke="#8496f5" stroke-width="1" stroke-dasharray="1 1" shape-rendering="crispEdges"/>
<line x1="742" x2="742" y1="777" y2="817" stroke="#8496f5" stroke-width="1" stroke-dasharray="1 1" shape-rendering="crispEdges"/>
<line x1="752" x2="752" y1="777" y2="817" stroke="#8496f5" stroke-width="1" stroke-dasharray="1 1" shape-rendering="crispEdges"/>
<line x1="762" x2="762" y1="777" y2="817" stroke="#8496f5" stroke-width="1" stroke-dasharray="1 1" shape-rendering="crispEdges"/>
<line x1="772" x2="772" y1="777" y2="817" stroke="#8496f5" stroke-width="1" stroke-dasharray="1 1" shape-rendering="crispEdges"/>
<line x1="782" x2="782" y1="777" y2="817" stroke="#8496f5" stroke-width="1" stroke-dasharray="1 1" shape-rendering="crispEdges"/>
<line x1="792" x2="792" y1="777" y2="817" stroke="#8496f5" stroke-width="1" stroke-dasharray="1 1" shape-rendering="crispEdges"/>
<line x1="802" x2="802" y1="777" y2="817" stroke="#8496f5" stroke-width="1" stroke-dasharray="1 1" shape-rendering="crispEdges"/>
<line x1="812" x2="812" y1="777" y2="817" stroke="#8496f5" stroke-width="1" stroke-dasharray="1 1" shape-rendering="crispEdges"/>
<line x1="822" x2="822" y1="777" y2="817" stroke="#8496f5" stroke-width="1" stroke-dasharray="1 1" shape-rendering="crispEdges"/>
<line x1="832" x2="832" y1="777" y2="817" stroke="#8496f5" stroke-width="1" stroke-dasharray="1 1" shape-rendering="crispEdges"/>
<line x1="842" x2="842" y1="777" y2="817" stroke="#8496f5" stroke-width="1" stroke-dasharray="1 1" shape-rendering="crispEdges"/>
<line x1="852" x2="852" y1="777" y2="817" stroke="#8496f5" stroke-width="1" stroke-dasharray="1 1" shape-rendering="crispEdges"/>
<line x1="862" x2="862" y1="777" y2="817" stroke="#8496f5" stroke-width="1" stroke-dasharray="1 1" shape-rendering="crispEdges"/>
<line x1="872" x2="872" y1="777" y2="817" stroke="#8496f5" stroke-width="1" stroke-dasharray="1 1" shape-rendering="crispEdges"/>
<line x1="882" x2="882" y1="777" y2="817" stroke="#8496f5" stroke-width="1" stroke-dasharray="1 1" shape-rendering="crispEdges"/>
<line x1="892" x2="892" y1="777" y2="817" stroke="#8496f5" stroke-width="1" stroke-dasharray="1 1" shape-rendering="crispEdges"/>
<line x1="902" x2="902" y1="777" y2="817" stroke="#8496f5" stroke-width="1" stroke-dasharray="1 1" shape-rendering="crispEdges"/>
<line x1="912" x2="912" y1="777" y2="817" stroke="#8496f5" stroke-width="1" stroke-dasharray="1 1" shape-rendering="crispEdges"/>
<line x1="922" x2="922" y1="777" y2="817" stroke="#8496f5" stroke-width="1" stroke-dasharray="1 1" shape-rendering="crispEdges"/>
<line x1="932" x2="932" y1="777" y2="817" stroke="#8496f5" stroke-width="1" stroke-dasharray="1 1" shape-rendering="crispEdges"/>
<line x1="942" x2="942" y1="777" y2="817" stroke="#8496f5" stroke-width="1" stroke-dasharray="1 1" shape-rendering="crispEdges"/>
<line x1="952" x2="952" y1="777" y2="817" stroke="#8496f5" stroke-width="1" stroke-dasharray="1 1" shape-rendering="crispEdges"/>
<line x1="962" x2="962" y1="777" y2="817" stroke="#8496f5" stroke-width="1" stroke-dasharray="1 1" shape-rendering="crispEdges"/>
<line x1="972" x2="972" y1="777" y2="817" stroke="#8496f5" stroke-width="1" stroke-dasharray="1 1" shape-rendering="crispEdges"/>
<line x1="982" x2="982" y1="777" y2="817" stroke="#8496f5" stroke-width="1" stroke-dasharray="1 1" shape-rendering="crispEdges"/>
<line x1="992" x2="992" y1="777" y2="817" stroke="#8496f5" stroke-width="1" stroke-dasharray="1 1" shape-rendering="crispEdges"/>
<line x1="1002" x2="1002" y1="777" y2="817" stroke="#8496f5" stroke-width="1" stroke-dasharray="1 1" shape-rendering="crispEdges"/>
<line x1="1012" x2="1012" y1="777" y2="817" stroke="#8496f5" stroke-width="1" stroke-dasharray="1 1" shape-rendering="crispEdges"/>
<line x1="1022" x2="1022" y1="777" y2="817" stroke="#8496f5" stroke-width="1" stroke-dasharray="1 1" shape-rendering="crispEdges"/>
<line x1="1032" x2="1032" y1="777" y2="817" stroke="#8496f5" stroke-width="1" stroke-dasharray="1 1" shape-rendering="crispEdges"/>
<line x1="1042" x2="1042" y1="777" y2="817" stroke="#8496f5" stroke-width="1" stroke-dasharray="1 1" shape-rendering="crispEdges"/>
<line x1="1052" x2="1052" y1="777" y2="817" stroke="#8496f5" stroke-width="1" stroke-dasharray="1 1" shape-rendering="crispEdges"/>
<line x1="1062" x2="1062" y1="777" y2="817" stroke="#8496f5" stroke-width="1" stroke-dasharray="1 1" shape-rendering="crispEdges"/>
<line x1="1072" x2="1072" y1="777" y2="817" stroke="#8496f5" stroke-width="1" stroke-dasharray="1 1" shape-rendering="crispEdges"/>
<line x1="1082" x2="1082" y1="777" y2="817" stroke="#8496f5" stroke-width="1" stroke-dasharray="1 1" shape-rendering="crispEdges"/>
<line x1="1092" x2="1092" y1="777" y2="817" stroke="#8496f5" stroke-width="1" stroke-dasharray="1 1" shape-rendering="crispEdges"/>
<line x1="1102" x2="1102" y1="777" y2="817" stroke="#8496f5" stroke-width="1" stroke-dasharray="1 1" shape-rendering="crispEdges"/>
<line x1="1112" x2="1112" y1="777" y2="817" stroke="#8496f5" stroke-width="1" stroke-dasharray="1 1" shape-rendering="crispEdges"/>
<line x1="1122" x2="1122" y1="777" y2="817" stroke="#8496f5" stroke-width="1" stroke-dasharray="1 1" shape-rendering="crispEdges"/>
<line x1="1132" x2="1132" y1="777" y2="817" stroke="#8496f5" stroke-width="1" stroke-dasharray="1 1" shape-rendering="crispEdges"/>
<line x1="1142" x2="1142" y1="777" y2="817" stroke="#8496f5" stroke-width="1" stroke-dasharray="1 1" shape-rendering="crispEdges"/>
<line x1="1152" x2="1152" y1="777" y2="817" stroke="#8496f5" stroke-width="1" stroke-dasharray="1 1" shape-rendering="crispEdges"/>
<line x1="1162" x2="1162" y1="777" y2="817" stroke="#8496f5" stroke-width="1" stroke-dasharray="1 1" shape-rendering="crispEdges"/>
<line x1="1172" x2="1172" y1="777" y2="817" stroke="#8496f5" stroke-width="1" stroke-dasharray="1 1" shape-rendering="crispEdges"/>
<line x1="1182" x2="1182" y1="777" y2="817" stroke="#8496f5" stroke-width="1" stroke-dasharray="1 1" shape-rendering="crispEdges"/>
<line x1="1192" x2="1192" y1="777" y2="817" stroke="#8496f5" stroke-width="1" stroke-dasharray="1 1" shape-rendering="crispEdges"/>
<line x1="1202" x2="1202" y1="777" y2="817" stroke="#8496f5" stroke-width="1" stroke-dasharray="1 1" shape-rendering="crispEdges"/>
<line x1="1212" x2="1212" y1="777" y2="817" stroke="#8496f5" stroke-width="1" stroke-dasharray="1 1" shape-rendering="crispEdges"/>
<line x1="1222" x2="1222" y1="777" y2="817" stroke="#8496f5" stroke-width="1" stroke-dasharray="1 1" shape-rendering="crispEdges"/>
<line x1="1232" x2="1232" y1="777" y2="817" stroke="#8496f5" stroke-width="1" stroke-dasharray="1 1" shape-rendering="crispEdges"/>
<line x1="1242" x2="1242" y1="777" y2="817" stroke="#8496f5" stroke-width="1" stroke-dasharray="1 1" shape-rendering="crispEdges"/>
<line x1="1252" x2="1252" y1="777" y2="817" stroke="#8496f5" stroke-width="1" stroke-dasharray="1 1" shape-rendering="crispEdges"/>
<line x1="1262" x2="1262" y1="777" y2="817" stroke="#8496f5" stroke-width="1" stroke-dasharray="1 1" shape-rendering="crispEdges"/>
<line x1="1272" x2="1272" y1="777" y2="817" stroke="#8496f5" stroke-width="1" stroke-dasharray="1 1" shape-rendering="crispEdges"/>
<line x1="1282" x2="1282" y1="777" y2="817" stroke="#8496f5" stroke-width="1" stroke-dasharray="1 1" shape-rendering="crispEdges"/>
<line x1="1292" x2="1292" y1="777" y2="817" stroke="#8496f5" stroke-width="1" stroke-dasharray="1 1" shape-rendering="crispEdges"/>
<line x1="1302" x2="1302" y1="777" y2="817" stroke="#8496f5" stroke-width="1" stroke-dasharray="1 1" shape-rendering="crispEdges"/>
<line x1="1312" x2="1312" y1="777" y2="817" stroke="#8496f5" stroke-width="1" stroke-dasharray="1 1" shape-rendering="crispEdges"/>
<line x1="1322" x2="1322" y1="777" y2="817" stroke="#8496f5" stroke-width="1" stroke-dasharray="1 1" shape-rendering="crispEdges"/>
<line x1="1332" x2="1332" y1="777" y2="817" stroke="#8496f5" stroke-width="1" stroke-dasharray="1 1" shape-rendering="crispEdges"/>
<line x1="1342" x2="1342" y1="777" y2="817" stroke="#8496f5" stroke-width="1" stroke-dasharray="1 1" shape-rendering="crispEdges"/>
<line x1="1352" x2="1352" y1="777" y2="817" stroke="#8496f5" stroke-width="1" stroke-dasharray="1 1" shape-rendering="crispEdges"/>
<line x1="1362" x2="1362" y1="777" y2="817" stroke="#8496f5" stroke-width="1" stroke-dasharray="1 1" shape-rendering="crispEdges"/>
<line x1="1372" x2="1372" y1="777" y2="817" stroke="#8496f5" stroke-width="1" stroke-dasharray="1 1" shape-rendering="crispEdges"/>
<line x1="1382" x2="1382" y1="777" y2="817" stroke="#8496f5" stroke-width="1" stroke-dasharray="1 1" shape-rendering="crispEdges"/>
<line x1="1392" x2="1392" y1="777" y2="817" stroke="#8496f5" stroke-width="1" stroke-dasharray="1 1" shape-rendering="crispEdges"/>
<line x1="1402" x2="1402" y1="777" y2="817" stroke="#8496f5" stroke-width="1" stroke-dasharray="1 1" shape-rendering="crispEdges"/>
<line x1="1412" x2="1412" y1="777" y2="817" stroke="#8496f5" stroke-width="1" stroke-dasharray="1 1" shape-rendering="crispEdges"/>
<line x1="1422" x2="1422" y1="777" y2="817" stroke="#8496f5" stroke-width="1" stroke-dasharray="1 1" shape-rendering="crispEdges"/>
<line x1="1432" x2="1432" y1="777" y2="817" stroke="#8496f5" stroke-width="1" stroke-dasharray="1 1" shape-rendering="crispEdges"/>
<line x1="1442" x2="1442" y1="777" y2="817" stroke="#8496f5" stroke-width="1" stroke-dasharray="1 1" shape-rendering="crispEdges"/>
<line x1="1452" x2="1452" y1="777" y2="817" stroke="#8496f5" stroke-width="1" stroke-dasharray="1 1" shape-rendering="crispEdges"/>
<line x1="1462" x2="1462" y1="777" y2="817" stroke="#8496f5" stroke-width="1" stroke-dasharray="1 1" shape-rendering="crispEdges"/>
<line x1="1472" x2="1472" y1="777" y2="817" stroke="#8496f5" stroke-width="1" stroke-dasharray="1 1" shape-rendering="crispEdges"/>
<line x1="1482" x2="1482" y1="777" y2="817" stroke="#8496f5" stroke-width="1" stroke-dasharray="1 1" shape-rendering="crispEdges"/>
<line x1="1492" x2="1492" y1="777" y2="817" stroke="#8496f5" stroke-width="1" stroke-dasharray="1 1" shape-rendering="crispEdges"/>
<line x1="1502" x2="1502" y1="777" y2="817" stroke="#8496f5" stroke-width="1" stroke-dasharray="1 1" shape-rendering="crispEdges"/>
<g shape-rendering="crispEdges">
<rect x="21" y="850" width="2" height="96" fill="#ff4500" />
<rect x="31" y="850" width="2" height="96" fill="#ff4500" />
<rect x="41" y="850" width="2" height="96" fill="#ff4500" />
<rect x="51" y="850" width="2" height="96" fill="#ff4500" />
<rect x="61" y="850" width="2" height="96" fill="#ff4500" />
<rect x="71" y="850" width="2" height="96" fill="#ff4500" />
<rect x="81" y="850" width="2" height="96" fill="#ff4500" />
<rect x="91" y="850" width="2" height="96" fill="#ff4500" />
<rect x="101" y="850" width="2" height="96" fill="#ff4500" />
<rect x="111" y="850" width="2" height="96" fill="#ff4500" />
<rect x="121" y="849" width="2" height="97" fill="#ff4500" />
<rect x="131" y="849" width="2" height="97" fill="#ff4500" />
<rect x="141" y="849" width="2" height="97" fill="#ff4500" />
<rect x="151" y="849" width="2" height="97" fill="#ff4500" />
<rect x="161" y="849" width="2" height="97" fill="#ff4500" />
<rect x="171" y="849" width="2" height="97" fill="#ff4500" />
<rect x="181" y="849" width="2" height="97" fill="#ff4500" />
<rect x="191" y="849" width="2" height="97" fill="#ff4500" />
<rect x="201" y="849" width="2" height="97" fill="#ff4500" />
<rect x="211" y="849" width="2" height="97" fill="#ff4500" />
<rect x="221" y="849" width="2" height="97" fill="#ff4500" />
<rect x="231" y="849" width="2" height="97" fill="#ff4500" />
<rect x="241" y="849" width="2" height="97" fill="#ff4500" />
<rect x="251" y="849" width="2" height="97" fill="#ff4500" />
<rect x="261" y="848" width="2" height="98" fill="#ff4500" />
<rect x="271" y="848" width="2" height="98" fill="#ff4500" />
<rect x="281" y="848" width="2" height="98" fill="#ff4500" />
<rect x="291" y="848" width="2" height="98" fill="#ff4500" />
<rect x="301" y="848" width="2" height="98" fill="#ff4500" />
<rect x="311" y="848" width="2" height="98" fill="#ff4500" />
<rect x="321" y="848" width="2" height="98" fill="#ff4500" />
<rect x="331" y="848" width="2" height="98" fill="#ff4500" />
<rect x="341" y="848" width="2" height="98" fill="#ff4500" />
<rect x="351" y="848" width="2" height="98" fill="#ff4500" />
<rect x="361" y="848" width="2" height="98" fill="#ff4500" />
<rect x="371" y="848" width="2" height="98" fill="#ff4500" />
<rect x="381" y="848" width="2" height="98" fill="#ff4500" />
<rect x="391" y="848" width="2" height="98" fill="#ff4500" />
<rect x="401" y="848" width="2" height="98" fill="#ff4500" />
<rect x="411" y="848" width="2" height="98" fill="#ff4500" />
<rect x="421" y="848" width="2" height="98" fill="#ff4500" />
<rect x="431" y="848" width="2" height="98" fill="#ff4500" />
<rect x="441" y="848" width="2" height="98" fill="#ff4500" />
<rect x="451" y="848" width="2" height="98" fill="#ff4500" />
<rect x="461" y="848" width="2" height="98" fill="#ff4500" />
<rect x="471" y="848" width="2" height="98" fill="#ff4500" />
<rect x="481" y="848" width="2" height="98" fill="#ff4500" />
<rect x="491" y="848" width="2" height="98" fill="#ff4500" />
<rect x="501" y="848" width="2" height="98" fill="#ff4500" />
<rect x="511" y="848" width="2" height="98" fill="#ff4500" />
<rect x="521" y="847" width="2" height="99" fill="#ff4500" />
<rect x="531" y="847" width="2" height="99" fill="#ff4500" />
<rect x="541" y="847" width="2" height="99" fill="#ff4500" />
<rect x="551" y="847" width="2" height="99" fill="#ff4500" />
<rect x="561" y="847" width="2" height="99" fill="#ff4500" />
<rect x="571" y="847" width="2" height="99" fill="#ff4500" />
<rect x="581" y="847" width="2" height="99" fill="#ff4500" />
<rect x="591" y="847" width="2" height="99" fill="#ff4500" />
<rect x="601" y="847" width="2" height="99" fill="#ff4500" />
<rect x="611" y="847" width="2" height="99" fill="#ff4500" />
<rect x="621" y="847" width="2" height="99" fill="#ff4500" />
<rect x="631" y="847" width="2" height="99" fill="#ff4500" />
<rect x="641" y="847" width="2" height="99" fill="#ff4500" />
<rect x="651" y="847" width="2" height="99" fill="#ff4500" />
<rect x="661" y="847" width="2" height="99" fill="#ff4500" />
<rect x="671" y="847" width="2" height="99" fill="#ff4500" />
<rect x="681" y="847" width="2" height="99" fill="#ff4500" />
<rect x="691" y="847" width="2" height="99" fill="#ff4500" />
<rect x="701" y="847" width="2" height="99" fill="#ff4500" />
<rect x="711" y="847" width="2" height="99" fill="#ff4500" />
<rect x="721" y="846" width="2" height="100" fill="#ff4500" />
<rect x="731" y="846" width="2" height="100" fill="#ff4500" />
<rect x="741" y="846" width="2" height="100" fill="#ff4500" />
<rect x="751" y="846" width="2" height="100" fill="#ff4500" />
<rect x="761" y="846" width="2" height="100" fill="#ff4500" />
<rect x="771" y="846" width="2" height="100" fill="#ff4500" />
<rect x="781" y="846" width="2" height="100" fill="#ff4500" />
<rect x="791" y="846" width="2" height="100" fill="#ff4500" />
<rect x="801" y="846" width="2" height="100" fill="#ff4500" />
<rect x="811" y="846" width="2" height="100" fill="#ff4500" />
<rect x="821" y="846" width="2" height="100" fill="#ff4500" />
<rect x="831" y="846" width="2" height="100" fill="#ff4500" />
<rect x="841" y="846" width="2" height="100" fill="#ff4500" />
<rect x="851" y="846" width="2" height="100" fill="#ff4500" />
<rect x="861" y="846" width="2" height="100" fill="#ff4500" />
<rect x="871" y="845" width="2" height="101" fill="#ff4500" />
<rect x="881" y="845" width="2" height="101" fill="#ff4500" />
<rect x="891" y="845" width="2" height="101" fill="#ff4500" />
<rect x="901" y="845" width="2" height="101" fill="#ff4500" />
<rect x="911" y="845" width="2" height="101" fill="#ff4500" />
<rect x="921" y="845" width="2" height="101" fill="#ff4500" />
<rect x="931" y="845" width="2" height="101" fill="#ff4500" />
<rect x="941" y="845" width="2" height="101" fill="#ff4500" />
<rect x="951" y="845" width="2" height="101" fill="#ff4500" />
<rect x="961" y="844" width="2" height="102" fill="#ff4500" />
<rect x="971" y="844" width="2" height="102" fill="#ff4500" />
<rect x="981" y="844" width="2" height="102" fill="#ff4500" />
<rect x="991" y="844" width="2" height="102" fill="#ff4500" />
<rect x="1001" y="844" width="2" height="102" fill="#ff4500" />
<rect x="1011" y="844" width="2" height="102" fill="#ff4500" />
<rect x="1021" y="844" width="2" height="102" fill="#ff4500" />
<rect x="1031" y="844" width="2" height="102" fill="#ff4500" />
<rect x="1041" y="844" width="2" height="102" fill="#ff4500" />
<rect x="1051" y="844" width="2" height="102" fill="#ff4500" />
<rect x="1061" y="844" width="2" height="102" fill="#ff4500" />
<rect x="1071" y="844" width="2" height="102" fill="#ff4500" />
<rect x="1081" y="844" width="2" height="102" fill="#ff4500" />
<rect x="1091" y="843" width="2" height="103" fill="#ff4500" />
<rect x="1101" y="843" width="2" height="103" fill="#ff4500" />
<rect x="1111" y="843" width="2" height="103" fill="#ff4500" />
<rect x="1121" y="843" width="2" height="103" fill="#ff4500" />
<rect x="1131" y="843" width="2" height="103" fill="#ff4500" />
<rect x="1141" y="843" width="2" height="103" fill="#ff4500" />
<rect x="1151" y="843" width="2" height="103" fill="#ff4500" />
<rect x="1161" y="843" width="2" height="103" fill="#ff4500" />
<rect x="1171" y="843" width="2" height="103" fill="#ff4500" />
<rect x="1181" y="843" width="2" height="103" fill="#ff4500" />
<rect x="1191" y="843" width="2" height="103" fill="#ff4500" />
<rect x="1201" y="843" width="2" height="103" fill="#ff4500" />
<rect x="1211" y="842" width="2" height="104" fill="#ff4500" />
<rect x="1221" y="842" width="2" height="104" fill="#ff4500" />
<rect x="1231" y="842" width="2" height="104" fill="#ff4500" />
<rect x="1241" y="842" width="2" height="104" fill="#ff4500" />
<rect x="1251" y="842" width="2" height="104" fill="#ff4500" />
<rect x="1261" y="842" width="2" height="104" fill="#ff4500" />
<rect x="1271" y="842" width="2" height="104" fill="#ff4500" />
<rect x="1281" y="842" width="2" height="104" fill="#ff4500" />
<rect x="1291" y="842" width="2" height="104" fill="#ff4500" />
<rect x="1301" y="842" width="2" height="104" fill="#ff4500" />
<rect x="1311" y="842" width="2" height="104" fill="#ff4500" />
<rect x="1321" y="842" width="2" height="104" fill="#ff4500" />
<rect x="1331" y="842" width="2" height="104" fill="#ff4500" />
<rect x="1341" y="842" width="2" height="104" fill="#ff4500" />
<rect x="1351" y="842" width="2" height="104" fill="#ff4500" />
<rect x="1361" y="841" width="2" height="105" fill="#ff4500" />
<rect x="1371" y="841" width="2" height="105" fill="#ff4500" />
<rect x="1381" y="841" width="2" height="105" fill="#ff4500" />
<rect x="1391" y="841" width="2" height="105" fill="#ff4500" />
<rect x="1401" y="841" width="2" height="105" fill="#ff4500" />
<rect x="1411" y="841" width="2" height="105" fill="#ff4500" />
<rect x="1421" y="841" width="2" height="105" fill="#ff4500" />
<rect x="1431" y="841" width="2" height="105" fill="#ff4500" />
<rect x="1441" y="841" width="2" height="105" fill="#ff4500" />
<rect x="1451" y="841" width="2" height="105" fill="#ff4500" />
<rect x="1461" y="841" width="2" height="105" fill="#ff4500" />
<rect x="1471" y="841" width="2" height="105" fill="#ff4500" />
<rect x="1481" y="841" width="2" height="105" fill="#ff4500" />
<rect x="1491" y="841" width="2" height="105" fill="#ff4500" />
<rect x="1501" y="841" width="2" height="105" fill="#ff4500" />
</g>
<polyline fill="none" stroke="#168c16" stroke-width="1.15" stroke-linejoin="round"  points="22.5,975.4 32.5,982.3 42.5,977.8 52.5,979.3 62.5,979.1 72.5,981.1 82.5,986 92.5,987.3 102.5,989.5 112.5,981.1 122.5,973.6 132.5,979.6 142.5,974.4 152.5,973.1 162.5,969.4 172.5,972.4 182.5,968.7 192.5,978.3 202.5,977.3 212.5,972.4 222.5,978.3 232.5,977.3 242.5,976.4 252.5,982.3 262.5,987.3 272.5,979.3 282.5,984.3 292.5,992.2 302.5,993.4 312.5,991.5 322.5,996.4 332.5,997.7 342.5,1001.4 352.5,1001.4 362.5,999.1 372.5,999.1 382.5,1003.4 392.5,1004.26 402.5,1005.12 412.5,1005.98 422.5,1006.83 432.5,1007.69 442.5,1008.55 452.5,1009.41 462.5,1010.27 472.5,1011.12 482.5,1011.98 492.5,1012.84 502.5,1013.7 512.5,1014.56 522.5,1015.42 532.5,1016.27 542.5,1017.13 552.5,1017.99 562.5,1018.85 572.5,1019.71 582.5,1020.57 592.5,1021.42 602.5,1022.28 612.5,1023.14 622.5,1024 632.5,1025.2 642.5,1027.3 652.5,1033.4 662.5,1036.7 672.5,1039.2 682.5,1043 692.5,1044.3 702.5,1048.6 712.5,1045.6 722.5,1049.4 732.5,1052.4 742.5,1056.3 752.5,1051.9 762.5,1049.1 772.5,1049.1 782.5,1053.5 792.5,1047.6 802.5,1050.7 812.5,1047.6 822.5,1045.6 832.5,1042.3 842.5,1046.6 852.5,1047.6 862.5,1050.7 872.5,1047.4 882.5,1048.6 892.5,1055.5 902.5,1045.6 912.5,1042.5 922.5,1037.4 932.5,1035.4 942.5,1030.3 952.5,1028.4 962.5,1030.4 972.5,1032.4 982.5,1020.6 992.5,1016.6 1002.5,1012.6 1012.5,1006.5 1022.5,999.4 1032.5,1000.4 1042.5,1001.4 1052.5,1004.5 1062.5,1002.4 1072.5,1008.3 1082.5,1005.5 1092.5,1005.5 1102.5,1002.4 1112.5,1006.5 1122.5,1010.6 1132.5,1009.6 1142.5,1009.6 1152.5,1013.4 1162.5,1003.2 1172.5,993 1182.5,984.9 1192.5,977.3 1202.5,979.3 1212.5,981.3 1222.5,986.2 1232.5,988.5 1242.5,993.3 1252.5,990.2 1262.5,985.4 1272.5,990.5 1282.5,991.5 1292.5,993.3 1302.5,994.3 1312.5,998.4 1322.5,989.5 1332.5,994.3 1342.5,995.3 1352.5,999.4 1362.5,1000.4 1372.5,1003.4 1382.5,1004.2 1392.5,1001.6 1402.5,1005.2 1412.5,1008.7 1422.5,1012.5 1432.5,1015.6 1442.5,1021.4 1452.5,1016.4 1462.5,1019.6 1472.5,1018.6 1482.5,1014.8 1492.5,1001.6 1502.5,995.3"/>
<g shape-rendering="crispEdges">
<rect x="8" y="442" width="1558" height="1" fill="#000" />
<rect x="8" y="571" width="1558" height="1" fill="#000" />
<rect x="8" y="700" width="1558" height="1" fill="#000" />
<rect x="8" y="829" width="1558" height="1" fill="#000" />
<rect x="8" y="958" width="1558" height="1" fill="#000" />
<rect x="1519" y="61" width="1" height="1002" fill="#000" />
<rect x="8" y="1062" width="1512" height="1" fill="#000" />
<rect x="22" y="1063" width="1" height="6" fill="#000" />
<rect x="82" y="1063" width="1" height="6" fill="#000" />
<rect x="142" y="1063" width="1" height="6" fill="#000" />
<rect x="202" y="1063" width="1" height="6" fill="#000" />
<rect x="262" y="1063" width="1" height="6" fill="#000" />
<rect x="322" y="1063" width="1" height="6" fill="#000" />
<rect x="382" y="1063" width="1" height="6" fill="#000" />
<rect x="442" y="1063" width="1" height="6" fill="#000" />
<rect x="502" y="1063" width="1" height="6" fill="#000" />
<rect x="562" y="1063" width="1" height="6" fill="#000" />
<rect x="622" y="1063" width="1" height="6" fill="#000" />
<rect x="682" y="1063" width="1" height="6" fill="#000" />
<rect x="742" y="1063" width="1" height="6" fill="#000" />
<rect x="802" y="1063" width="1" height="6" fill="#000" />
<rect x="862" y="1063" width="1" height="6" fill="#000" />
<rect x="922" y="1063" width="1" height="6" fill="#000" />
<rect x="982" y="1063" width="1" height="6" fill="#000" />
<rect x="1042" y="1063" width="1" height="6" fill="#000" />
<rect x="1102" y="1063" width="1" height="6" fill="#000" />
<rect x="1162" y="1063" width="1" height="6" fill="#000" />
<rect x="1222" y="1063" width="1" height="6" fill="#000" />
<rect x="1282" y="1063" width="1" height="6" fill="#000" />
<rect x="1342" y="1063" width="1" height="6" fill="#000" />
<rect x="1402" y="1063" width="1" height="6" fill="#000" />
<rect x="1462" y="1063" width="1" height="6" fill="#000" />
</g>
<text x="21.8" y="1079" fill="#000" font-size="11" text-anchor="middle" >21:25</text>
<text x="81.8" y="1079" fill="#000" font-size="11" text-anchor="middle" >21:26</text>
<text x="141.8" y="1079" fill="#000" font-size="11" text-anchor="middle" >21:26</text>
<text x="201.8" y="1079" fill="#000" font-size="11" text-anchor="middle" >21:27</text>
<text x="261.8" y="1079" fill="#000" font-size="11" text-anchor="middle" >21:28</text>
<text x="321.8" y="1079" fill="#000" font-size="11" text-anchor="middle" >21:28</text>
<text x="381.8" y="1079" fill="#000" font-size="11" text-anchor="middle" >21:28</text>
<text x="441.8" y="1079" fill="#000" font-size="11" text-anchor="middle" >21:28</text>
<text x="501.8" y="1079" fill="#000" font-size="11" text-anchor="middle" >21:28</text>
<text x="561.8" y="1079" fill="#000" font-size="11" text-anchor="middle" >21:28</text>
<text x="621.8" y="1079" fill="#000" font-size="11" text-anchor="middle" >21:28</text>
<text x="681.8" y="1079" fill="#000" font-size="11" text-anchor="middle" >21:29</text>
<text x="741.8" y="1079" fill="#000" font-size="11" text-anchor="middle" >21:29</text>
<text x="801.8" y="1079" fill="#000" font-size="11" text-anchor="middle" >21:30</text>
<text x="861.8" y="1079" fill="#000" font-size="11" text-anchor="middle" >21:31</text>
<text x="921.8" y="1079" fill="#000" font-size="11" text-anchor="middle" >21:32</text>
<text x="981.8" y="1079" fill="#000" font-size="11" text-anchor="middle" >21:37</text>
<text x="1041.8" y="1079" fill="#000" font-size="11" text-anchor="middle" >21:42</text>
<text x="1101.8" y="1079" fill="#000" font-size="11" text-anchor="middle" >21:50</text>
<text x="1161.8" y="1079" fill="#000" font-size="11" text-anchor="middle" >21:58</text>
<text x="1221.8" y="1079" fill="#000" font-size="11" text-anchor="middle" >22:02</text>
<text x="1281.8" y="1079" fill="#000" font-size="11" text-anchor="middle" >22:16</text>
<text x="1341.8" y="1079" fill="#000" font-size="11" text-anchor="middle" >22:25</text>
<text x="1401.8" y="1079" fill="#000" font-size="11" text-anchor="middle" >22:42</text>
<text x="1461.8" y="1079" fill="#000" font-size="11" text-anchor="middle" >23:14</text>
<rect x="1520" y="83" width="6" height="1" fill="#000" shape-rendering="crispEdges"/>
<text x="1527.3" y="88" fill="#000" font-size="11" text-anchor="start" >60,10</text>
<rect x="1520" y="118" width="6" height="1" fill="#000" shape-rendering="crispEdges"/>
<text x="1527.3" y="123" fill="#000" font-size="11" text-anchor="start" >60,05</text>
<rect x="1520" y="154" width="6" height="1" fill="#000" shape-rendering="crispEdges"/>
<text x="1527.3" y="159" fill="#000" font-size="11" text-anchor="start" >60,00</text>
<rect x="1520" y="189" width="6" height="1" fill="#000" shape-rendering="crispEdges"/>
<text x="1527.3" y="194" fill="#000" font-size="11" text-anchor="start" >59,95</text>
<rect x="1520" y="224" width="6" height="1" fill="#000" shape-rendering="crispEdges"/>
<text x="1527.3" y="229" fill="#000" font-size="11" text-anchor="start" >59,90</text>
<rect x="1520" y="260" width="6" height="1" fill="#000" shape-rendering="crispEdges"/>
<text x="1527.3" y="265" fill="#000" font-size="11" text-anchor="start" >59,85</text>
<rect x="1520" y="295" width="6" height="1" fill="#000" shape-rendering="crispEdges"/>
<text x="1527.3" y="300" fill="#000" font-size="11" text-anchor="start" >59,80</text>
<rect x="1520" y="331" width="6" height="1" fill="#000" shape-rendering="crispEdges"/>
<text x="1527.3" y="336" fill="#000" font-size="11" text-anchor="start" >59,75</text>
<rect x="1520" y="366" width="6" height="1" fill="#000" shape-rendering="crispEdges"/>
<text x="1527.3" y="371" fill="#000" font-size="11" text-anchor="start" >59,70</text>
<rect x="1520" y="401" width="6" height="1" fill="#000" shape-rendering="crispEdges"/>
<text x="1527.3" y="406" fill="#000" font-size="11" text-anchor="start" >59,65</text>
<rect x="1520" y="437" width="6" height="1" fill="#000" shape-rendering="crispEdges"/>
<text x="1527.3" y="442" fill="#000" font-size="11" text-anchor="start" >59,60</text>
<rect x="1520" y="454" width="6" height="1" fill="#000" shape-rendering="crispEdges"/>
<text x="1527.3" y="459" fill="#000" font-size="11" text-anchor="start" >0,08</text>
<rect x="1520" y="507" width="6" height="1" fill="#000" shape-rendering="crispEdges"/>
<text x="1527.3" y="512" fill="#000" font-size="11" text-anchor="start" >0,04</text>
<rect x="1520" y="533" width="6" height="1" fill="#000" shape-rendering="crispEdges"/>
<text x="1527.3" y="538" fill="#000" font-size="11" text-anchor="start" >0,02</text>
<rect x="1520" y="559" width="6" height="1" fill="#000" shape-rendering="crispEdges"/>
<text x="1527.3" y="564" fill="#000" font-size="11" text-anchor="start" >0</text>
<rect x="1520" y="604" width="6" height="1" fill="#000" shape-rendering="crispEdges"/>
<text x="1527.3" y="609" fill="#000" font-size="11" text-anchor="start" >200</text>
<rect x="1520" y="688" width="6" height="1" fill="#000" shape-rendering="crispEdges"/>
<text x="1527.3" y="693" fill="#000" font-size="11" text-anchor="start" >0</text>
<rect x="1520" y="734" width="6" height="1" fill="#000" shape-rendering="crispEdges"/>
<text x="1527.3" y="739" fill="#000" font-size="11" text-anchor="start" >2</text>
<rect x="1520" y="817" width="6" height="1" fill="#000" shape-rendering="crispEdges"/>
<text x="1527.3" y="822" fill="#000" font-size="11" text-anchor="start" >0</text>
<rect x="1520" y="847" width="6" height="1" fill="#000" shape-rendering="crispEdges"/>
<text x="1527.3" y="852" fill="#000" font-size="11" text-anchor="start" >60</text>
<rect x="1520" y="880" width="6" height="1" fill="#000" shape-rendering="crispEdges"/>
<text x="1527.3" y="885" fill="#000" font-size="11" text-anchor="start" >40</text>
<rect x="1520" y="913" width="6" height="1" fill="#000" shape-rendering="crispEdges"/>
<text x="1527.3" y="918" fill="#000" font-size="11" text-anchor="start" >20</text>
<rect x="1520" y="946" width="6" height="1" fill="#000" shape-rendering="crispEdges"/>
<text x="1527.3" y="951" fill="#000" font-size="11" text-anchor="start" >0</text>
<rect x="1520" y="963" width="6" height="1" fill="#000" shape-rendering="crispEdges"/>
<text x="1527.3" y="968" fill="#000" font-size="11" text-anchor="start" >5</text>
<rect x="1520" y="1009" width="6" height="1" fill="#000" shape-rendering="crispEdges"/>
<text x="1527.3" y="1014" fill="#000" font-size="11" text-anchor="start" >4</text>
<rect x="1520" y="1054" width="6" height="1" fill="#000" shape-rendering="crispEdges"/>
<text x="1527.3" y="1059" fill="#000" font-size="11" text-anchor="start" >3</text>
<path d="M1520.5,256 L1526.5,249.5 L1556.04,249.5 L1556.04,262.5 L1526.5,262.5 Z" fill="#ff69b4" stroke="#000" stroke-width="1"/>
<text x="1528" y="259.8" fill="#000" font-size="11" text-anchor="start" >59,86</text>
<path d="M1520.5,331 L1526.5,324.5 L1556.04,324.5 L1556.04,337.5 L1526.5,337.5 Z" fill="#000" stroke="#000" stroke-width="1"/>
<text x="1528" y="334.8" fill="#fff" font-size="11" text-anchor="start" >59,75</text>
<path d="M1520.5,416.5 L1526.5,410.0 L1556.04,410.0 L1556.04,423.0 L1526.5,423.0 Z" fill="#ff69b4" stroke="#000" stroke-width="1"/>
<text x="1528" y="420.3" fill="#000" font-size="11" text-anchor="start" >59,63</text>
<path d="M1520.5,480 L1526.5,473.5 L1549.92,473.5 L1549.92,486.5 L1526.5,486.5 Z" fill="#000" stroke="#000" stroke-width="1"/>
<text x="1528" y="483.8" fill="#fff" font-size="11" text-anchor="start" >0,06</text>
<path d="M1520.5,504 L1526.5,497.5 L1556.04,497.5 L1556.04,510.5 L1526.5,510.5 Z" fill="#ff4500" stroke="#000" stroke-width="1"/>
<text x="1528" y="507.8" fill="#fff" font-size="11" text-anchor="start" >0,042</text>
<path d="M1520.5,583 L1526.5,576.5 L1546.86,576.5 L1546.86,589.5 L1526.5,589.5 Z" fill="#008000" stroke="#000" stroke-width="1"/>
<text x="1528" y="586.8" fill="#fff" font-size="11" text-anchor="start" >253</text>
<path d="M1520.5,597 L1526.5,590.5 L1546.86,590.5 L1546.86,603.5 L1526.5,603.5 Z" fill="#000" stroke="#000" stroke-width="1"/>
<text x="1528" y="600.8" fill="#fff" font-size="11" text-anchor="start" >220</text>
<path d="M1520.5,619 L1526.5,612.5 L1546.86,612.5 L1546.86,625.5 L1526.5,625.5 Z" fill="#696969" stroke="#000" stroke-width="1"/>
<text x="1528" y="622.8" fill="#fff" font-size="11" text-anchor="start" >165</text>
<path d="M1520.5,614 L1526.5,607.5 L1562.16,607.5 L1562.16,620.5 L1526.5,620.5 Z" fill="#ffa500" stroke="#000" stroke-width="1"/>
<text x="1528" y="617.8" fill="#000" font-size="11" text-anchor="start" >177,98</text>
<path d="M1520.5,631.5 L1526.5,625.0 L1556.04,625.0 L1556.04,638.0 L1526.5,638.0 Z" fill="#0000ff" stroke="#000" stroke-width="1"/>
<text x="1528" y="635.3" fill="#fff" font-size="11" text-anchor="start" >137,5</text>
<path d="M1520.5,642.5 L1526.5,636.0 L1546.86,636.0 L1546.86,649.0 L1526.5,649.0 Z" fill="#000" stroke="#000" stroke-width="1"/>
<text x="1528" y="646.3" fill="#fff" font-size="11" text-anchor="start" >110</text>
<path d="M1520.5,654.5 L1526.5,648.0 L1549.92,648.0 L1549.92,661.0 L1526.5,661.0 Z" fill="#0000ff" stroke="#000" stroke-width="1"/>
<text x="1528" y="658.3" fill="#fff" font-size="11" text-anchor="start" >82,5</text>
<path d="M1520.5,666 L1526.5,659.5 L1540.74,659.5 L1540.74,672.5 L1526.5,672.5 Z" fill="#696969" stroke="#000" stroke-width="1"/>
<text x="1528" y="669.8" fill="#fff" font-size="11" text-anchor="start" >55</text>
<path d="M1520.5,677.5 L1526.5,671.0 L1549.92,671.0 L1549.92,684.0 L1526.5,684.0 Z" fill="#ff0000" stroke="#000" stroke-width="1"/>
<text x="1528" y="681.3" fill="#fff" font-size="11" text-anchor="start" >27,5</text>
<path d="M1520.5,712 L1526.5,705.5 L1549.92,705.5 L1549.92,718.5 L1526.5,718.5 Z" fill="#0000ff" stroke="#000" stroke-width="1"/>
<text x="1528" y="715.8" fill="#fff" font-size="11" text-anchor="start" >2,53</text>
<path d="M1520.5,755 L1526.5,748.5 L1549.92,748.5 L1549.92,761.5 L1526.5,761.5 Z" fill="#a9a9a9" stroke="#000" stroke-width="1"/>
<text x="1528" y="758.8" fill="#000" font-size="11" text-anchor="start" >1,49</text>
<path d="M1520.5,766 L1526.5,759.5 L1549.92,759.5 L1549.92,772.5 L1526.5,772.5 Z" fill="#0000ff" stroke="#000" stroke-width="1"/>
<text x="1528" y="769.8" fill="#fff" font-size="11" text-anchor="start" >1,24</text>
<path d="M1520.5,776 L1526.5,769.5 L1549.92,769.5 L1549.92,782.5 L1526.5,782.5 Z" fill="#ffa500" stroke="#000" stroke-width="1"/>
<text x="1528" y="779.8" fill="#000" font-size="11" text-anchor="start" >0,99</text>
<path d="M1520.5,786.5 L1526.5,780.0 L1556.04,780.0 L1556.04,793.0 L1526.5,793.0 Z" fill="#0000ff" stroke="#000" stroke-width="1"/>
<text x="1528" y="790.3" fill="#fff" font-size="11" text-anchor="start" >0,743</text>
<path d="M1520.5,797 L1526.5,790.5 L1556.04,790.5 L1556.04,803.5 L1526.5,803.5 Z" fill="#a9a9a9" stroke="#000" stroke-width="1"/>
<text x="1528" y="800.8" fill="#000" font-size="11" text-anchor="start" >0,495</text>
<path d="M1520.5,807.5 L1526.5,801.0 L1556.04,801.0 L1556.04,814.0 L1526.5,814.0 Z" fill="#ff0000" stroke="#000" stroke-width="1"/>
<text x="1528" y="811.3" fill="#fff" font-size="11" text-anchor="start" >0,248</text>
<path d="M1520.5,841 L1526.5,834.5 L1556.04,834.5 L1556.04,847.5 L1526.5,847.5 Z" fill="#ff4500" stroke="#000" stroke-width="1"/>
<text x="1528" y="844.8" fill="#fff" font-size="11" text-anchor="start" >64,15</text>
<path d="M1520.5,995 L1526.5,988.5 L1549.92,988.5 L1549.92,1001.5 L1526.5,1001.5 Z" fill="#008000" stroke="#000" stroke-width="1"/>
<text x="1528" y="998.8" fill="#fff" font-size="11" text-anchor="start" >4,29</text>
<rect x="97.5" y="602.5" width="21" height="93" fill="#fdf6ea" stroke="#000" stroke-width="1"/>
<text x="99" y="611" fill="#000" font-size="11" text-anchor="start" letter-spacing="-0.3">0</text>
<text x="99" y="623.2" fill="#000" font-size="11" text-anchor="start" letter-spacing="-0.3">7,98</text>
<text x="99" y="635.4" fill="#000" font-size="11" text-anchor="start" letter-spacing="-0.3">5</text>
<text x="99" y="647.6" fill="#000" font-size="11" text-anchor="start" letter-spacing="-0.3">7,5</text>
<text x="99" y="659.8" fill="#000" font-size="11" text-anchor="start" letter-spacing="-0.3">0</text>
<text x="99" y="672" fill="#000" font-size="11" text-anchor="start" letter-spacing="-0.3">5</text>
<text x="99" y="696.4" fill="#000" font-size="11" text-anchor="start" letter-spacing="-0.3">5</text>
<rect x="14.5" y="584.5" width="83" height="111" fill="#fff" fill-opacity="0.93" stroke="#000" stroke-width="1"/>
<g fill="#000" fill-opacity="0.07">
<text x="18" y="611" textLength="79" lengthAdjust="spacingAndGlyphs">Range 200%=220</text>
<text x="18" y="623.2" textLength="79" lengthAdjust="spacingAndGlyphs">Range Ext=177,98</text>
<text x="18" y="635.4" textLength="79" lengthAdjust="spacingAndGlyphs">Range 150%=165</text>
<text x="18" y="647.6" textLength="79" lengthAdjust="spacingAndGlyphs">Range 125%=137,5</text>
<text x="18" y="659.8" textLength="79" lengthAdjust="spacingAndGlyphs">Range 100%=110</text>
<text x="18" y="672" textLength="79" lengthAdjust="spacingAndGlyphs">Range 75%=82,5</text>
<text x="18" y="684.2" textLength="79" lengthAdjust="spacingAndGlyphs">Range 50%=55</text>
<text x="18" y="696.4" textLength="79" lengthAdjust="spacingAndGlyphs">Range 25%=27,5</text>
</g>
<text x="17" y="594.5" fill="#000" font-size="11" text-anchor="start" letter-spacing="-0.2">3 Sessions</text>
<text x="17" y="606.5" fill="#000" font-size="11" text-anchor="start" letter-spacing="-0.2">R25% : 2=66%</text>
<text x="17" y="618.75" fill="#000" font-size="11" text-anchor="start" letter-spacing="-0.2">R50% : 2=66%</text>
<text x="17" y="631" fill="#000" font-size="11" text-anchor="start" letter-spacing="-0.2">R75% : 2=66%</text>
<text x="17" y="643.25" fill="#000" font-size="11" text-anchor="start" letter-spacing="-0.2">R100% : 1=33%</text>
<text x="17" y="655.5" fill="#000" font-size="11" text-anchor="start" letter-spacing="-0.2">R125% : 1=33%</text>
<text x="17" y="667.75" fill="#000" font-size="11" text-anchor="start" letter-spacing="-0.2">R150% : 1=33%</text>
<text x="17" y="680" fill="#000" font-size="11" text-anchor="start" letter-spacing="-0.2">R200% : 1=33%</text>
<rect x="1405.5" y="602.5" width="108" height="25" fill="#fffff0" stroke="#000" stroke-width="1"/>
<text x="1407.7" y="612" fill="#000" font-size="11" text-anchor="start" letter-spacing="0.1">Current Range=253</text>
<text x="1410.2" y="624" fill="#000" font-size="11" text-anchor="start" letter-spacing="0.12">Wednesday &gt;=200%</text>
<text x="11.5" y="72" fill="#000" font-size="11" text-anchor="start" letter-spacing="0.13">MT ATR Volatility Bands</text>
<text x="11.5" y="464" fill="#000" font-size="11" text-anchor="start" letter-spacing="0.13">MT ATR</text>
<text x="11.5" y="594" fill="#000" font-size="11" text-anchor="start" letter-spacing="0.13">MT ATR Range Grid Pro</text>
<text x="11.5" y="722" fill="#000" font-size="11" text-anchor="start" letter-spacing="0.13">MT ATR Range Grid HTF</text>
<text x="11.5" y="851" fill="#000" font-size="11" text-anchor="start" letter-spacing="0.13">MT ATR Stacked</text>
<text x="11.5" y="980" fill="#000" font-size="11" text-anchor="start" letter-spacing="0.13">MT ATR Ticks</text>
<text x="11.5" y="1059.5" fill="#000" font-size="11" text-anchor="start" letter-spacing="0.13">© 2015 NinjaTrader, LLC</text>
</svg><svg class="abs" style="left:0;top:0" width="1574" height="60" viewBox="0 0 1574 60">
<defs>
<linearGradient id="gG" x1="0" x2="1"><stop offset="0" stop-color="#2fc410"/><stop offset=".5" stop-color="#8dff55"/><stop offset="1" stop-color="#35c814"/></linearGradient>
<linearGradient id="gR" x1="0" x2="1"><stop offset="0" stop-color="#d61c12"/><stop offset=".5" stop-color="#ff7460"/><stop offset="1" stop-color="#d8200f"/></linearGradient>
<linearGradient id="gBox" x1="0" x2="0" y1="0" y2="1"><stop offset="0" stop-color="#fdfdfd"/><stop offset=".6" stop-color="#dcdcdc"/><stop offset="1" stop-color="#b4b4b4"/></linearGradient>
<radialGradient id="gLens"><stop offset="0" stop-color="#7db6ee"/><stop offset=".75" stop-color="#9ccaf5"/><stop offset="1" stop-color="#d5d5d5"/></radialGradient>
<radialGradient id="gLensG"><stop offset="0" stop-color="#d0d0d0"/><stop offset="1" stop-color="#e2e2e2"/></radialGradient>
</defs>
<!-- app icon -->
<g>
<rect x="11.5" y="8.5" width="13" height="13" fill="#eef0fb" stroke="#7f86c8"/>
<path d="M12,17.5H24M12,13.5H24M16.5,9V21M20.5,9V21" stroke="#b9bde6" stroke-width="1" fill="none"/>
<polyline points="12.5,17.5 15,14 17.5,15.5 20.5,11.5 23.5,13" fill="none" stroke="#2f6bd8" stroke-width="1.5"/>
<polyline points="12.5,13.5 15.5,11.5 18,13 21,10 23.5,9.5" fill="none" stroke="#28a93a" stroke-width="1.5"/>
</g>
<!-- window buttons -->
<rect x="1478" y="12.5" width="8" height="2.5" fill="#111"/>
<rect x="1504.5" y="8" width="9" height="6.5" fill="none" stroke="#111" stroke-width="1"/><rect x="1504" y="7" width="10" height="2.2" fill="#111"/>
<path d="M1541,8 L1549,15 M1549,8 L1541,15" stroke="#fff" stroke-width="1.9" fill="none"/>
<!-- toolbar grip -->
<g fill="#b5b5b5"><rect x="11" y="36" width="2" height="2"/><rect x="11" y="40" width="2" height="2"/><rect x="11" y="44" width="2" height="2"/><rect x="11" y="48" width="2" height="1.5"/></g>
<!-- candle icon -->
<g>
<rect x="162.2" y="36.1" width="1.3" height="14.1" fill="#111"/><rect x="161" y="37.6" width="3.6" height="10.7" rx="1" fill="url(#gG)"/>
<rect x="167.3" y="35.3" width="1.3" height="14.1" fill="#111"/><rect x="166.1" y="36.9" width="3.6" height="10.2" rx="1" fill="url(#gG)"/>
<rect x="172.4" y="36.3" width="1.3" height="13.9" fill="#111"/><rect x="171.2" y="38" width="3.6" height="9.9" rx="1" fill="url(#gR)"/>
</g>
<!-- pencil -->
<g>
<path d="M190,49.9 L191.2,46.2 L194,48.8 Z" fill="#c9b79c" stroke="#8a7a66" stroke-width=".4"/>
<path d="M190,49.9 L190.5,48.6 L191.2,49.4 Z" fill="#444"/>
<path d="M191.2,46.2 L200.6,37.6 L203.6,40.4 L194,48.8 Z" fill="#f7d21a" stroke="#c79a10" stroke-width=".5"/>
<path d="M192.7,47.5 L202.1,39 " stroke="#ffe96a" stroke-width="1" fill="none"/>
<path d="M200.6,37.6 L201.9,36.5 Q203.8,36.2 204.7,38.6 L203.6,40.4 Z" fill="#ea6a78" stroke="#c44a58" stroke-width=".4"/>
</g>
<!-- zoom in -->
<g>
<path d="M219.2,50.4 L223.4,46.6" stroke="#333" stroke-width="1.8" stroke-linecap="round"/>
<circle cx="225.8" cy="43.7" r="4.3" fill="url(#gLens)" stroke="#b4b4b4" stroke-width="1"/>
<path d="M231.9,35.9V41.7M229,38.8H234.8" stroke="#13a538" stroke-width="2"/>
</g>
<!-- zoom out (disabled) -->
<g>
<path d="M242.4,50.4 L246.6,46.6" stroke="#bdbdbd" stroke-width="1.8" stroke-linecap="round"/>
<circle cx="249.1" cy="43.7" r="4.3" fill="url(#gLensG)" stroke="#d0d0d0" stroke-width="1"/>
<path d="M252.1,39H257.9" stroke="#c4c4c4" stroke-width="1.6"/>
</g>
<!-- arrow cursor -->
<path d="M271.6,37.3 L272.9,45.3 L275.1,43.6 L281.8,49.4 L283.7,47.4 L277.2,41.6 L279.2,39.6 Z" fill="#fff" stroke="#3a3a3a" stroke-width=".9" stroke-linejoin="round"/>
<!-- zoom box -->
<g>
<rect x="301.6" y="35.7" width="12.8" height="14.4" fill="#fff" stroke="#8a8a8a" stroke-width="1"/>
<path d="M300.6,50.4 L304.6,46.8" stroke="#444" stroke-width="1.7" stroke-linecap="round"/>
<circle cx="307.3" cy="43.7" r="4" fill="url(#gLens)" stroke="#b4b4b4" stroke-width="1"/>
</g>
<!-- icon 1 -->
<g>
<path d="M334,37.5H345M334,41.3H345M334,44.5H345M334,48.2H345" stroke="#d6d6d6" stroke-width="1"/>
<path d="M329,35.8H335.2L337.2,37.1L335.2,38.4H329Z" fill="#35e012" stroke="#22b80a" stroke-width=".4"/>
<path d="M329,43.4H335.2L337.2,44.7L335.2,46H329Z" fill="#f02020" stroke="#c01010" stroke-width=".4"/>
<rect x="338.1" y="37.4" width="2.4" height="13.2" fill="url(#gG)"/><circle cx="339.3" cy="37.4" r="0.9" fill="#111"/>
<rect x="341.6" y="45.4" width="2.3" height="5.2" fill="url(#gR)"/><circle cx="342.7" cy="45.2" r="0.8" fill="#111"/>
</g>
<!-- icon 2 -->
<g>
<rect x="352.6" y="35.7" width="14.8" height="14.4" fill="#f1f1f1" stroke="#8a8a8a" stroke-width="1"/>
<path d="M353,39H367M353,42H367M353,45H367M353,48H367" stroke="#d0d0d0" stroke-width=".7"/>
<rect x="354.9" y="37.9" width="1.1" height="11.6" fill="#111"/><rect x="354.1" y="39.3" width="2.7" height="8.6" rx=".8" fill="url(#gG)"/>
<rect x="359.5" y="36.4" width="1.1" height="10.4" fill="#111"/><rect x="358.7" y="37.8" width="2.7" height="7.4" rx=".8" fill="url(#gG)"/>
<rect x="363.9" y="38.6" width="1.1" height="11" fill="#111"/><rect x="363" y="40.1" width="2.9" height="8.2" rx=".8" fill="url(#gR)"/>
</g>
<!-- icon 3 -->
<g>
<rect x="375.6" y="35.7" width="14.8" height="14.4" fill="url(#gBox)" stroke="#8a8a8a" stroke-width="1"/>
<polyline points="377,41.5 378.3,38.8 379.6,41 381.4,38.8 383.6,37.2 385.6,38 387.2,39.6 389,41" fill="none" stroke="#2fb272" stroke-width="1"/>
<polyline points="377,44.3 378.4,45.8 380,44.2 381.6,44.5 383,43 384.6,43.8 386.2,43.4 388.8,45.8" fill="none" stroke="#e03244" stroke-width="1"/>
</g>
<!-- icon 4 -->
<g>
<path d="M400.6,36.7H408.8L411.5,39.4V49.5H400.6Z" fill="#fff" stroke="#8a8a8a" stroke-width="1"/>
<path d="M408.8,36.7V39.4H411.5" fill="none" stroke="#9a9a9a" stroke-width=".8"/>
<text x="406" y="47" font-family="Liberation Sans, Arial, sans-serif" font-weight="bold" font-size="11.5" fill="#1f9d1f" text-anchor="middle">$</text>
</g>
<!-- icon 5 -->
<g>
<rect x="422.6" y="35.7" width="12.8" height="14.6" fill="#e9edfb" stroke="#8a8a8a" stroke-width="1"/>
<rect x="424" y="37" width="9.9" height="2.8" fill="#3b9be2"/><rect x="425" y="38" width="8" height=".8" fill="#9fd0f5"/>
<rect x="424" y="41" width="2.9" height="7.7" fill="#a35ff2"/><rect x="425" y="41.8" width=".9" height="6" fill="#d9bcfb"/>
<path d="M428,41.6H434M428,43.7H434M428,45.8H434M428,47.9H434" stroke="#c9cfe6" stroke-width="1"/>
</g>
<!-- scroll arrows drawn elsewhere -->
</svg>
<svg class="abs" style="left:0;top:1085px" width="1574" height="36" viewBox="0 1085 1574 36">
<path d="M18.3,1097 L14.2,1100.5 L18.3,1104" fill="none" stroke="#484848" stroke-width="2"/>
<path d="M1555.7,1097 L1559.8,1100.5 L1555.7,1104" fill="none" stroke="#484848" stroke-width="2"/>
</svg>
<div class="abs" id="dlg">
 <div class="abs" id="dtitle">Indicators</div>
 <div class="abs" id="dclose">x</div>
 <div class="abs" id="dlgc"><div class="abs" style="left:0;top:1px">
  <!-- left container panel -->
  <div class="abs" style="left:1px;top:0;width:274px;height:371px;border-left:2px solid #6e6e6e;border-top:2px solid #6e6e6e;border-bottom:1px solid #fff;box-sizing:border-box"></div>
  <div class="lb" style="left:3px;top:2px;width:269px;height:210px;border:1px solid #a0a0a0;border-top:1px solid #8a8a8a;padding-top:1px;height:209px">
   <div>Momentum</div><div>MT ATR</div><div>MT ATR Range Grid Pro</div><div>MT ATR Range HTF</div><div>MT ATR Stacked</div><div>MT ATR Ticks</div><div>MT ATR Volatility Bands</div><div>MT Chop And Trend</div><div>MT Divergence</div><div>MT Economic News</div><div>MT Levels Dynamic Fib. Grid</div><div>MT Levels Dynamic Fib. Grid Pro</div><div>MT Levels Dynamic Fibonacci Curr Sess</div><div>MT Levels Dynamic Fibonacci Prior HTF</div><div>MT Levels Horizontal SR</div><div>MT Levels Horizontal SR HTF</div>
   <span class="abs" style="left:252px;top:0;width:17px;height:210px;background:#f4f4f4"></span>
   <span class="abs" style="left:253px;top:68px;width:15px;height:17px;background:#cdcdcd"></span><svg class="abs" style="left:252px;top:0" width="17" height="210"><path d="M5,12.5 L8.5,9 L12,12.5 M5,197 L8.5,200.5 L12,197" fill="none" stroke="#505050" stroke-width="1.6"/></svg>
  </div>
  <div class="lb" style="left:3px;top:218px;width:269px;height:104px;border:1px solid #9a9a9a;padding-top:1px;box-sizing:content-box">
   <div>MT ATR</div><div>MT ATR Range Grid Pro</div><div>MT ATR Range Grid HTF</div><div>MT ATR Stacked</div><div>MT ATR Ticks</div><div style="background:#3399ff;color:#fff;margin:0 1px;padding-left:2px">MT ATR Volatility Bands</div>
  </div>
  <div class="btn" style="left:28px;top:340px;width:66px;border-color:#d0d0d0;background:#f0f0f0;color:#a0a0a0">New</div>
  <div class="btn" style="left:181px;top:340px;width:66px">Remove</div>
  <div class="btn" style="left:90px;top:401px;width:79px">OK</div>
  <div class="btn" style="left:243px;top:401px;width:79px;border-color:#3c96f0">Apply</div>
  <div class="btn" style="left:396px;top:401px;width:78px">Close</div>
  <!-- property grid -->
  <div class="pg" id="pg" style="left:282px;top:1px;width:277px;height:305px;background:#fff;border:1px solid #a0a0a0;border-top:2px solid #828282;overflow:hidden">
   <div class="abs" style="left:0;top:0;width:14px;height:288px;background:#c6c6c6"></div>
   <div class="row" style="top:1px"><div class="n">ATR Multiplier</div><div class="v">2,5</div></div>
   <div class="row" style="top:17px"><div class="n">ATR Period</div><div class="v">4</div></div>
   <div class="row" style="top:33px"><div class="n">ATR Smoothing</div><div class="v">5</div></div>
   <div class="cat" style="top:49px"><span class="pm"></span>Data</div>
   <div class="row" style="top:65px"><div class="n">Calculate on bar close</div><div class="v">True</div></div>
   <div class="row" style="top:81px"><div class="n">Input series</div><div class="v">CL 07-15 (150 Tick)</div></div>
   <div class="row" style="top:97px"><div class="n">Maximum bars look back</div><div class="v">TwoHundredFiftySix</div></div>
   <div class="cat" style="top:113px"><span class="pm"></span>Visual</div>
   <div class="row" style="top:129px"><div class="n">Auto scale</div><div class="v">True</div></div>
   <div class="row" style="top:145px"><div class="n">Displacement</div><div class="v">0</div></div>
   <div class="row" style="top:161px"><div class="n">Display in Data Box</div><div class="v">True</div></div>
   <div class="row" style="top:177px"><div class="n" style="background:#c6c6c6">Label</div><div class="v">MT ATR Volatility Bands</div></div>
   <div class="row" style="top:193px"><div class="n">Panel</div><div class="v">Same as input series</div></div>
   <div class="row" style="top:209px"><div class="n">Price marker(s)</div><div class="v">True</div></div>
   <div class="row" style="top:225px"><div class="n">Scale justification</div><div class="v">Right</div></div>
   <div class="cat" style="top:241px"><span class="pm"></span>Plots</div>
   <div class="row" style="top:257px"><span class="pm plus"></span><div class="n">Lower Volatility Band</div><div class="v" style="text-indent:30px">Line; Solid; 1px<svg class="abs" style="left:1px;top:1px" width="21" height="13"><rect x=".5" y=".5" width="19" height="12" fill="#fff" stroke="#000"/><polyline points="1.5,11 6.5,3.5 11.5,6.5 18.5,2" fill="none" stroke="#ff69b4" stroke-width="1.6"/></svg></div></div>
   <div class="row" style="top:273px"><span class="pm plus"></span><div class="n">Upper Volatility Band</div><div class="v" style="text-indent:30px">Line; Solid; 1px<svg class="abs" style="left:1px;top:1px" width="21" height="13"><rect x=".5" y=".5" width="19" height="12" fill="#fff" stroke="#000"/><polyline points="1.5,11 6.5,3.5 11.5,6.5 18.5,2" fill="none" stroke="#ff69b4" stroke-width="1.6"/></svg></div></div>
   <!-- scrollbar -->
   <div class="abs" style="left:261px;top:0;width:16px;height:305px;background:#f0f0f0"></div>
   <div class="abs" style="left:262px;top:31px;width:14px;height:257px;background:#c1c1c1"></div><svg class="abs" style="left:261px;top:0" width="16" height="305"><path d="M4.5,11.5 L8,8 L11.5,11.5 M4.5,293.5 L8,297 L11.5,293.5" fill="none" stroke="#505050" stroke-width="1.6"/></svg>
  </div>
  <!-- description -->
  <div class="abs" style="left:282px;top:311px;width:277px;height:56px;border:1px solid #a0a0a0;background:#f0f0f0;font-size:11px;line-height:13px;white-space:pre">
   <div class="abs" style="left:5px;top:3px;font-weight:bold;font-size:11.5px">Label</div>
   <div class="abs" style="left:5px;top:17px;font-size:11.5px;letter-spacing:-0.12px">MicroTrends ATR Volatility Bands with Price Support</div>
   <div class="abs" style="left:5px;top:30px;font-size:11.5px;letter-spacing:-0.12px">- version 7.0.1.64- Copyright 2010,2011,2012,2013, ...</div>
  </div>
 <svg class="abs" style="left:551px;top:426px" width="10" height="10"><g fill="#a6a6a6"><rect x="7" y="1" width="2" height="2"/><rect x="4" y="4" width="2" height="2"/><rect x="7" y="4" width="2" height="2"/><rect x="1" y="7" width="2" height="2"/><rect x="4" y="7" width="2" height="2"/><rect x="7" y="7" width="2" height="2"/></g></svg>
 </div></div>
</div>
</body></html>
